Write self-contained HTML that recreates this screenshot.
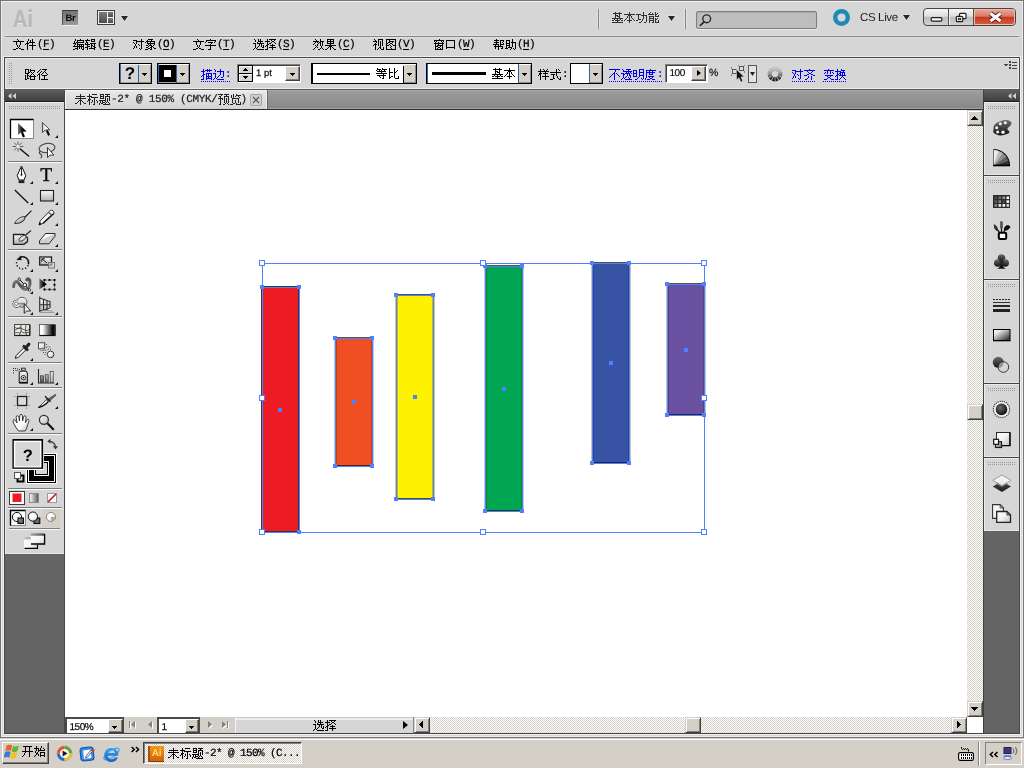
<!DOCTYPE html>
<html lang="zh">
<head>
<meta charset="utf-8">
<title>Adobe Illustrator - 未标题-2* @ 150% (CMYK/预览)</title>
<style>
html,body{margin:0;padding:0}
body{width:1024px;height:768px;overflow:hidden;position:relative;will-change:transform;text-rendering:geometricPrecision;font-kerning:none;background:#d6d6d6;font-family:"Liberation Sans",sans-serif;font-size:12px;line-height:12px;color:#000}
.a{position:absolute}
.t{position:absolute;white-space:nowrap;height:12px;line-height:12px;font-size:0}
.t span{font-family:"Liberation Mono",monospace;font-size:11px;letter-spacing:-.6px;vertical-align:top;display:inline-block;height:12px;line-height:12px;position:relative;top:1px;-webkit-text-stroke:.22px currentColor}
.t u{text-decoration:underline;text-underline-offset:2px;text-decoration-thickness:1px}
svg.z{display:inline-block;vertical-align:top;overflow:visible;fill:currentColor;shape-rendering:crispEdges}
svg.zv{display:inline-block;vertical-align:top;overflow:visible;fill:currentColor}
.lnk{color:#0000e6}
.lnk::after{content:"";position:absolute;left:0;right:1px;bottom:-2px;height:1px;background:repeating-linear-gradient(90deg,#0000e6 0 1px,transparent 1px 2px)}
.tri{position:absolute;width:0;height:0;border-left:3.800px solid transparent;border-right:3.800px solid transparent;border-top:5.300px solid #262626;margin-left:-.3px}
.chk{background-color:#fff;background-image:conic-gradient(#d4d0c8 25%,#fff 0 50%,#d4d0c8 0 75%,#fff 0);background-size:2px 2px}
.btn{position:absolute;background:#d4d0c8;box-sizing:border-box;border:1px solid;border-color:#fff #404040 #404040 #fff;box-shadow:inset -1px -1px 0 #808080,inset 1px 1px 0 #d4d0c8}
.sunk{position:absolute;box-sizing:border-box;border:1px solid;border-color:#808080 #fff #fff #808080;box-shadow:inset 1px 1px 0 #404040}
.dd{position:absolute;box-sizing:border-box;border:1px solid #000;background:#fff}
.ddb{position:absolute;background:#d4d0c8;top:0;bottom:0;right:0;width:12px;box-shadow:inset 0 1px 0 #fff,inset -1px -1px 0 #8a8a8a}
.ar{position:absolute;width:5px;height:3px;background:linear-gradient(#000,#000) 0 0/5px 1px no-repeat,linear-gradient(#000,#000) 1px 1px/3px 1px no-repeat,linear-gradient(#000,#000) 2px 2px/1px 1px no-repeat}
.sep{position:absolute;left:8px;width:54px;height:1px;background:#7c7c7c;box-shadow:0 1px 0 #fafafa}
.grip{position:absolute;height:3px;background-image:radial-gradient(circle at 0.5px 0.5px,#9a9a9a 0.6px,transparent 0.7px);background-size:2px 2px}
</style>
</head>
<body>
<svg width="0" height="0" style="position:absolute;left:-10px;top:-10px" aria-hidden="true"><defs><path id="r57fa" d="M3 1h1v1h-1zM7 1h1v1h-1zM1 2h9v1h-9zM3 3h1v1h-1zM7 3h1v1h-1zM3 4h3v1h-3zM7 4h1v1h-1zM3 5h1v1h-1zM5 5h3v1h-3zM3 6h1v1h-1zM7 6h1v1h-1zM0 7h11v1h-11zM2 8h1v1h-1zM5 8h1v1h-1zM8 8h1v1h-1zM0 9h2v1h-2zM3 9h5v1h-5zM9 9h2v1h-2zM5 10h1v1h-1zM0 11h11v1h-11z"/><path id="r672c" d="M5 1h1v1h-1zM5 2h1v1h-1zM0 3h11v1h-11zM4 4h3v1h-3zM3 5h1v1h-1zM5 5h1v1h-1zM7 5h1v1h-1zM3 6h1v1h-1zM5 6h1v1h-1zM7 6h1v1h-1zM2 7h1v1h-1zM5 7h1v1h-1zM8 7h1v1h-1zM1 8h1v1h-1zM5 8h1v1h-1zM9 8h1v1h-1zM0 9h1v1h-1zM3 9h5v1h-5zM10 9h1v1h-1zM5 10h1v1h-1zM5 11h1v1h-1z"/><path id="r529f" d="M7 1h1v1h-1zM7 2h1v1h-1zM0 3h5v1h-5zM7 3h1v1h-1zM2 4h1v1h-1zM5 4h6v1h-6zM2 5h1v1h-1zM7 5h1v1h-1zM10 5h1v1h-1zM2 6h1v1h-1zM7 6h1v1h-1zM10 6h1v1h-1zM2 7h1v1h-1zM7 7h1v1h-1zM10 7h1v1h-1zM2 8h3v1h-3zM6 8h1v1h-1zM10 8h1v1h-1zM0 9h2v1h-2zM6 9h1v1h-1zM10 9h1v1h-1zM5 10h1v1h-1zM10 10h1v1h-1zM3 11h2v1h-2zM8 11h2v1h-2z"/><path id="r80fd" d="M2 1h1v1h-1zM7 1h1v1h-1zM1 2h1v1h-1zM4 2h1v1h-1zM7 2h1v1h-1zM9 2h1v1h-1zM0 3h6v1h-6zM7 3h2v1h-2zM7 4h1v1h-1zM10 4h1v1h-1zM1 5h5v1h-5zM7 5h4v1h-4zM1 6h1v1h-1zM5 6h1v1h-1zM1 7h5v1h-5zM7 7h1v1h-1zM9 7h1v1h-1zM1 8h1v1h-1zM5 8h1v1h-1zM7 8h2v1h-2zM1 9h5v1h-5zM7 9h1v1h-1zM10 9h1v1h-1zM1 10h1v1h-1zM5 10h1v1h-1zM7 10h1v1h-1zM10 10h1v1h-1zM1 11h1v1h-1zM4 11h2v1h-2zM7 11h4v1h-4z"/><path id="r6587" d="M4 1h1v1h-1zM5 2h1v1h-1zM0 3h11v1h-11zM3 4h1v1h-1zM7 4h1v1h-1zM3 5h1v1h-1zM7 5h1v1h-1zM3 6h1v1h-1zM7 6h1v1h-1zM4 7h1v1h-1zM6 7h1v1h-1zM4 8h1v1h-1zM6 8h1v1h-1zM5 9h1v1h-1zM3 10h2v1h-2zM6 10h2v1h-2zM0 11h3v1h-3zM8 11h3v1h-3z"/><path id="r4ef6" d="M3 1h1v1h-1zM7 1h1v1h-1zM3 2h1v1h-1zM5 2h1v1h-1zM7 2h1v1h-1zM2 3h1v1h-1zM5 3h1v1h-1zM7 3h1v1h-1zM2 4h1v1h-1zM4 4h6v1h-6zM1 5h3v1h-3zM7 5h1v1h-1zM0 6h1v1h-1zM2 6h1v1h-1zM7 6h1v1h-1zM2 7h1v1h-1zM4 7h7v1h-7zM2 8h1v1h-1zM7 8h1v1h-1zM2 9h1v1h-1zM7 9h1v1h-1zM2 10h1v1h-1zM7 10h1v1h-1zM2 11h1v1h-1zM7 11h1v1h-1z"/><path id="r7f16" d="M2 1h1v1h-1zM7 1h1v1h-1zM2 2h1v1h-1zM4 2h7v1h-7zM1 3h1v1h-1zM4 3h1v1h-1zM10 3h1v1h-1zM1 4h1v1h-1zM3 4h8v1h-8zM0 5h3v1h-3zM4 5h1v1h-1zM2 6h1v1h-1zM4 6h7v1h-7zM1 7h1v1h-1zM4 7h1v1h-1zM6 7h1v1h-1zM8 7h1v1h-1zM10 7h1v1h-1zM0 8h11v1h-11zM4 9h1v1h-1zM6 9h1v1h-1zM8 9h1v1h-1zM10 9h1v1h-1zM2 10h3v1h-3zM6 10h1v1h-1zM8 10h1v1h-1zM10 10h1v1h-1zM0 11h2v1h-2zM4 11h1v1h-1zM9 11h2v1h-2z"/><path id="r8f91" d="M2 1h1v1h-1zM6 1h4v1h-4zM0 2h5v1h-5zM6 2h1v1h-1zM9 2h1v1h-1zM1 3h1v1h-1zM6 3h4v1h-4zM1 4h2v1h-2zM0 5h1v1h-1zM2 5h1v1h-1zM5 5h6v1h-6zM0 6h5v1h-5zM6 6h1v1h-1zM9 6h1v1h-1zM2 7h1v1h-1zM6 7h2v1h-2zM9 7h1v1h-1zM2 8h3v1h-3zM6 8h1v1h-1zM8 8h2v1h-2zM0 9h3v1h-3zM6 9h1v1h-1zM9 9h2v1h-2zM2 10h1v1h-1zM4 10h6v1h-6zM2 11h1v1h-1zM9 11h1v1h-1z"/><path id="r5bf9" d="M8 1h1v1h-1zM0 2h4v1h-4zM8 2h1v1h-1zM3 3h8v1h-8zM0 4h1v1h-1zM3 4h1v1h-1zM8 4h1v1h-1zM1 5h1v1h-1zM3 5h1v1h-1zM8 5h1v1h-1zM2 6h1v1h-1zM5 6h1v1h-1zM8 6h1v1h-1zM2 7h1v1h-1zM6 7h1v1h-1zM8 7h1v1h-1zM1 8h1v1h-1zM3 8h1v1h-1zM8 8h1v1h-1zM1 9h1v1h-1zM3 9h1v1h-1zM8 9h1v1h-1zM0 10h1v1h-1zM6 10h1v1h-1zM8 10h1v1h-1zM7 11h1v1h-1z"/><path id="r8c61" d="M3 1h5v1h-5zM2 2h1v1h-1zM6 2h1v1h-1zM1 3h9v1h-9zM0 4h1v1h-1zM2 4h1v1h-1zM5 4h1v1h-1zM9 4h1v1h-1zM2 5h8v1h-8zM3 6h1v1h-1zM5 6h1v1h-1zM9 6h1v1h-1zM1 7h2v1h-2zM4 7h3v1h-3zM8 7h1v1h-1zM3 8h1v1h-1zM6 8h2v1h-2zM1 9h2v1h-2zM5 9h2v1h-2zM8 9h1v1h-1zM3 10h2v1h-2zM6 10h1v1h-1zM9 10h2v1h-2zM0 11h3v1h-3zM5 11h2v1h-2z"/><path id="r5b57" d="M5 1h1v1h-1zM1 2h10v1h-10zM1 3h1v1h-1zM10 3h1v1h-1zM0 4h1v1h-1zM3 4h5v1h-5zM9 4h1v1h-1zM6 5h1v1h-1zM5 6h1v1h-1zM0 7h11v1h-11zM5 8h1v1h-1zM5 9h1v1h-1zM5 10h1v1h-1zM3 11h3v1h-3z"/><path id="r9009" d="M1 1h1v1h-1zM5 1h1v1h-1zM7 1h1v1h-1zM2 2h1v1h-1zM5 2h1v1h-1zM7 2h1v1h-1zM2 3h1v1h-1zM5 3h5v1h-5zM4 4h1v1h-1zM7 4h1v1h-1zM0 5h3v1h-3zM4 5h7v1h-7zM2 6h1v1h-1zM6 6h1v1h-1zM8 6h1v1h-1zM2 7h1v1h-1zM6 7h1v1h-1zM8 7h1v1h-1zM10 7h1v1h-1zM2 8h1v1h-1zM5 8h1v1h-1zM8 8h1v1h-1zM10 8h1v1h-1zM2 9h1v1h-1zM4 9h1v1h-1zM9 9h2v1h-2zM1 10h1v1h-1zM3 10h1v1h-1zM0 11h1v1h-1zM4 11h7v1h-7z"/><path id="r62e9" d="M2 1h1v1h-1zM4 1h7v1h-7zM2 2h1v1h-1zM6 2h1v1h-1zM9 2h1v1h-1zM0 3h5v1h-5zM7 3h2v1h-2zM2 4h1v1h-1zM6 4h1v1h-1zM9 4h1v1h-1zM2 5h1v1h-1zM4 5h2v1h-2zM10 5h1v1h-1zM2 6h2v1h-2zM7 6h1v1h-1zM1 7h2v1h-2zM5 7h5v1h-5zM0 8h1v1h-1zM2 8h1v1h-1zM7 8h1v1h-1zM2 9h1v1h-1zM4 9h7v1h-7zM2 10h1v1h-1zM7 10h1v1h-1zM0 11h3v1h-3zM7 11h1v1h-1z"/><path id="r6548" d="M2 1h1v1h-1zM7 1h1v1h-1zM3 2h1v1h-1zM7 2h1v1h-1zM0 3h6v1h-6zM7 3h4v1h-4zM2 4h1v1h-1zM4 4h1v1h-1zM6 4h2v1h-2zM9 4h1v1h-1zM1 5h1v1h-1zM5 5h1v1h-1zM7 5h1v1h-1zM9 5h1v1h-1zM0 6h1v1h-1zM4 6h1v1h-1zM7 6h1v1h-1zM9 6h1v1h-1zM2 7h1v1h-1zM4 7h1v1h-1zM7 7h1v1h-1zM9 7h1v1h-1zM3 8h1v1h-1zM8 8h1v1h-1zM2 9h1v1h-1zM4 9h1v1h-1zM8 9h1v1h-1zM1 10h1v1h-1zM7 10h1v1h-1zM9 10h1v1h-1zM0 11h1v1h-1zM5 11h2v1h-2zM10 11h1v1h-1z"/><path id="r679c" d="M2 1h7v1h-7zM2 2h1v1h-1zM5 2h1v1h-1zM8 2h1v1h-1zM2 3h7v1h-7zM2 4h1v1h-1zM5 4h1v1h-1zM8 4h1v1h-1zM2 5h7v1h-7zM5 6h1v1h-1zM0 7h11v1h-11zM4 8h3v1h-3zM3 9h1v1h-1zM5 9h1v1h-1zM7 9h1v1h-1zM2 10h1v1h-1zM5 10h1v1h-1zM8 10h1v1h-1zM0 11h2v1h-2zM5 11h1v1h-1zM9 11h2v1h-2z"/><path id="r89c6" d="M1 1h1v1h-1zM5 1h5v1h-5zM2 2h1v1h-1zM5 2h1v1h-1zM9 2h1v1h-1zM0 3h4v1h-4zM5 3h1v1h-1zM7 3h1v1h-1zM9 3h1v1h-1zM3 4h1v1h-1zM5 4h1v1h-1zM7 4h1v1h-1zM9 4h1v1h-1zM2 5h1v1h-1zM5 5h1v1h-1zM7 5h1v1h-1zM9 5h1v1h-1zM1 6h3v1h-3zM5 6h1v1h-1zM7 6h1v1h-1zM9 6h1v1h-1zM0 7h1v1h-1zM2 7h1v1h-1zM5 7h1v1h-1zM7 7h1v1h-1zM9 7h1v1h-1zM2 8h1v1h-1zM7 8h1v1h-1zM2 9h1v1h-1zM6 9h2v1h-2zM10 9h1v1h-1zM2 10h1v1h-1zM5 10h1v1h-1zM7 10h1v1h-1zM10 10h1v1h-1zM2 11h1v1h-1zM4 11h1v1h-1zM8 11h3v1h-3z"/><path id="r56fe" d="M1 1h10v1h-10zM1 2h1v1h-1zM4 2h1v1h-1zM10 2h1v1h-1zM1 3h1v1h-1zM4 3h5v1h-5zM10 3h1v1h-1zM1 4h1v1h-1zM3 4h2v1h-2zM7 4h1v1h-1zM10 4h1v1h-1zM1 5h2v1h-2zM5 5h2v1h-2zM10 5h1v1h-1zM1 6h1v1h-1zM4 6h1v1h-1zM7 6h1v1h-1zM10 6h1v1h-1zM1 7h3v1h-3zM5 7h1v1h-1zM8 7h3v1h-3zM1 8h1v1h-1zM6 8h1v1h-1zM10 8h1v1h-1zM1 9h1v1h-1zM5 9h1v1h-1zM10 9h1v1h-1zM1 10h1v1h-1zM6 10h1v1h-1zM10 10h1v1h-1zM1 11h10v1h-10z"/><path id="r7a97" d="M6 1h1v1h-1zM1 2h10v1h-10zM1 3h1v1h-1zM3 3h1v1h-1zM8 3h1v1h-1zM10 3h1v1h-1zM2 4h1v1h-1zM5 4h1v1h-1zM9 4h1v1h-1zM1 5h10v1h-10zM2 6h1v1h-1zM5 6h1v1h-1zM9 6h1v1h-1zM2 7h1v1h-1zM4 7h6v1h-6zM2 8h3v1h-3zM7 8h1v1h-1zM9 8h1v1h-1zM2 9h1v1h-1zM5 9h2v1h-2zM9 9h1v1h-1zM2 10h1v1h-1zM4 10h1v1h-1zM7 10h1v1h-1zM9 10h1v1h-1zM2 11h8v1h-8z"/><path id="r53e3" d="M1 2h9v1h-9zM1 3h1v1h-1zM9 3h1v1h-1zM1 4h1v1h-1zM9 4h1v1h-1zM1 5h1v1h-1zM9 5h1v1h-1zM1 6h1v1h-1zM9 6h1v1h-1zM1 7h1v1h-1zM9 7h1v1h-1zM1 8h1v1h-1zM9 8h1v1h-1zM1 9h9v1h-9zM1 10h1v1h-1zM9 10h1v1h-1z"/><path id="r5e2e" d="M3 1h1v1h-1zM1 2h5v1h-5zM7 2h4v1h-4zM3 3h1v1h-1zM7 3h1v1h-1zM10 3h1v1h-1zM1 4h5v1h-5zM7 4h1v1h-1zM9 4h1v1h-1zM3 5h1v1h-1zM7 5h1v1h-1zM10 5h1v1h-1zM0 6h6v1h-6zM7 6h4v1h-4zM2 7h1v1h-1zM5 7h1v1h-1zM7 7h1v1h-1zM1 8h9v1h-9zM2 9h1v1h-1zM5 9h1v1h-1zM9 9h1v1h-1zM2 10h1v1h-1zM5 10h1v1h-1zM8 10h2v1h-2zM5 11h1v1h-1z"/><path id="r52a9" d="M7 1h1v1h-1zM1 2h4v1h-4zM7 2h1v1h-1zM1 3h1v1h-1zM4 3h1v1h-1zM7 3h1v1h-1zM1 4h1v1h-1zM4 4h1v1h-1zM6 4h5v1h-5zM1 5h4v1h-4zM7 5h1v1h-1zM10 5h1v1h-1zM1 6h1v1h-1zM4 6h1v1h-1zM7 6h1v1h-1zM10 6h1v1h-1zM1 7h4v1h-4zM7 7h1v1h-1zM10 7h1v1h-1zM1 8h1v1h-1zM4 8h1v1h-1zM7 8h1v1h-1zM10 8h1v1h-1zM1 9h1v1h-1zM3 9h4v1h-4zM10 9h1v1h-1zM0 10h3v1h-3zM6 10h1v1h-1zM8 10h1v1h-1zM10 10h1v1h-1zM5 11h1v1h-1zM9 11h1v1h-1z"/><path id="r8def" d="M0 1h4v1h-4zM5 1h1v1h-1zM0 2h1v1h-1zM3 2h1v1h-1zM5 2h5v1h-5zM0 3h1v1h-1zM3 3h1v1h-1zM5 3h1v1h-1zM9 3h1v1h-1zM0 4h1v1h-1zM3 4h2v1h-2zM6 4h1v1h-1zM8 4h1v1h-1zM0 5h4v1h-4zM7 5h1v1h-1zM2 6h1v1h-1zM6 6h1v1h-1zM8 6h1v1h-1zM0 7h1v1h-1zM2 7h2v1h-2zM5 7h1v1h-1zM9 7h1v1h-1zM0 8h1v1h-1zM2 8h1v1h-1zM4 8h7v1h-7zM0 9h1v1h-1zM2 9h1v1h-1zM5 9h1v1h-1zM9 9h1v1h-1zM0 10h1v1h-1zM2 10h2v1h-2zM5 10h1v1h-1zM9 10h1v1h-1zM0 11h2v1h-2zM5 11h5v1h-5z"/><path id="r5f84" d="M3 1h1v1h-1zM5 1h5v1h-5zM2 2h1v1h-1zM8 2h1v1h-1zM1 3h1v1h-1zM4 3h1v1h-1zM7 3h1v1h-1zM0 4h1v1h-1zM3 4h1v1h-1zM6 4h1v1h-1zM8 4h1v1h-1zM2 5h1v1h-1zM5 5h1v1h-1zM9 5h1v1h-1zM1 6h2v1h-2zM4 6h1v1h-1zM10 6h1v1h-1zM0 7h1v1h-1zM2 7h1v1h-1zM5 7h5v1h-5zM2 8h1v1h-1zM7 8h1v1h-1zM2 9h1v1h-1zM7 9h1v1h-1zM2 10h1v1h-1zM7 10h1v1h-1zM2 11h1v1h-1zM4 11h7v1h-7z"/><path id="r63cf" d="M2 1h1v1h-1zM6 1h1v1h-1zM8 1h1v1h-1zM2 2h1v1h-1zM4 2h7v1h-7zM0 3h4v1h-4zM6 3h1v1h-1zM8 3h1v1h-1zM2 4h1v1h-1zM2 5h1v1h-1zM5 5h6v1h-6zM2 6h2v1h-2zM5 6h1v1h-1zM7 6h1v1h-1zM10 6h1v1h-1zM1 7h2v1h-2zM5 7h1v1h-1zM7 7h1v1h-1zM10 7h1v1h-1zM0 8h1v1h-1zM2 8h1v1h-1zM5 8h6v1h-6zM2 9h1v1h-1zM5 9h1v1h-1zM7 9h1v1h-1zM10 9h1v1h-1zM2 10h1v1h-1zM5 10h6v1h-6zM0 11h3v1h-3zM5 11h1v1h-1zM10 11h1v1h-1z"/><path id="r8fb9" d="M1 1h1v1h-1zM7 1h1v1h-1zM2 2h1v1h-1zM7 2h1v1h-1zM2 3h1v1h-1zM4 3h7v1h-7zM7 4h1v1h-1zM10 4h1v1h-1zM0 5h3v1h-3zM7 5h1v1h-1zM10 5h1v1h-1zM2 6h1v1h-1zM7 6h1v1h-1zM10 6h1v1h-1zM2 7h1v1h-1zM6 7h1v1h-1zM10 7h1v1h-1zM2 8h1v1h-1zM5 8h1v1h-1zM10 8h1v1h-1zM2 9h1v1h-1zM4 9h1v1h-1zM8 9h2v1h-2zM1 10h1v1h-1zM3 10h1v1h-1zM0 11h1v1h-1zM4 11h7v1h-7z"/><path id="r7b49" d="M1 1h1v1h-1zM6 1h1v1h-1zM1 2h4v1h-4zM6 2h5v1h-5zM0 3h1v1h-1zM3 3h1v1h-1zM5 3h1v1h-1zM8 3h1v1h-1zM1 4h9v1h-9zM5 5h1v1h-1zM0 6h11v1h-11zM7 7h1v1h-1zM1 8h9v1h-9zM3 9h1v1h-1zM7 9h1v1h-1zM4 10h1v1h-1zM7 10h1v1h-1zM6 11h2v1h-2z"/><path id="r6bd4" d="M1 1h1v1h-1zM6 1h1v1h-1zM1 2h1v1h-1zM6 2h1v1h-1zM1 3h1v1h-1zM6 3h1v1h-1zM9 3h1v1h-1zM1 4h1v1h-1zM6 4h1v1h-1zM8 4h1v1h-1zM1 5h4v1h-4zM6 5h2v1h-2zM1 6h1v1h-1zM6 6h1v1h-1zM1 7h1v1h-1zM6 7h1v1h-1zM1 8h1v1h-1zM6 8h1v1h-1zM1 9h1v1h-1zM3 9h2v1h-2zM6 9h1v1h-1zM10 9h1v1h-1zM1 10h2v1h-2zM6 10h1v1h-1zM10 10h1v1h-1zM1 11h1v1h-1zM7 11h4v1h-4z"/><path id="r6837" d="M2 1h1v1h-1zM5 1h1v1h-1zM9 1h1v1h-1zM2 2h1v1h-1zM6 2h1v1h-1zM8 2h1v1h-1zM0 3h11v1h-11zM2 4h1v1h-1zM7 4h1v1h-1zM1 5h3v1h-3zM5 5h5v1h-5zM1 6h2v1h-2zM7 6h1v1h-1zM0 7h1v1h-1zM2 7h1v1h-1zM7 7h1v1h-1zM2 8h1v1h-1zM4 8h7v1h-7zM2 9h1v1h-1zM7 9h1v1h-1zM2 10h1v1h-1zM7 10h1v1h-1zM2 11h1v1h-1zM7 11h1v1h-1z"/><path id="r5f0f" d="M6 1h1v1h-1zM8 1h1v1h-1zM6 2h1v1h-1zM9 2h1v1h-1zM6 3h1v1h-1zM0 4h11v1h-11zM6 5h1v1h-1zM1 6h4v1h-4zM6 6h1v1h-1zM3 7h1v1h-1zM6 7h1v1h-1zM3 8h1v1h-1zM7 8h1v1h-1zM3 9h1v1h-1zM7 9h1v1h-1zM10 9h1v1h-1zM3 10h2v1h-2zM8 10h1v1h-1zM10 10h1v1h-1zM0 11h3v1h-3zM9 11h2v1h-2z"/><path id="r4e0d" d="M0 1h11v1h-11zM6 2h1v1h-1zM6 3h1v1h-1zM5 4h1v1h-1zM4 5h2v1h-2zM7 5h1v1h-1zM3 6h1v1h-1zM5 6h1v1h-1zM8 6h1v1h-1zM2 7h1v1h-1zM5 7h1v1h-1zM9 7h1v1h-1zM1 8h1v1h-1zM5 8h1v1h-1zM10 8h1v1h-1zM0 9h1v1h-1zM5 9h1v1h-1zM5 10h1v1h-1zM5 11h1v1h-1z"/><path id="r900f" d="M1 1h1v1h-1zM5 1h5v1h-5zM2 2h1v1h-1zM7 2h1v1h-1zM2 3h9v1h-9zM5 4h1v1h-1zM7 4h1v1h-1zM9 4h1v1h-1zM0 5h3v1h-3zM4 5h5v1h-5zM10 5h1v1h-1zM2 6h2v1h-2zM6 6h1v1h-1zM8 6h1v1h-1zM2 7h1v1h-1zM6 7h1v1h-1zM8 7h2v1h-2zM2 8h1v1h-1zM5 8h1v1h-1zM9 8h1v1h-1zM2 9h1v1h-1zM4 9h1v1h-1zM7 9h1v1h-1zM9 9h1v1h-1zM1 10h1v1h-1zM3 10h1v1h-1zM8 10h1v1h-1zM0 11h1v1h-1zM4 11h7v1h-7z"/><path id="r660e" d="M6 1h5v1h-5zM0 2h4v1h-4zM6 2h1v1h-1zM10 2h1v1h-1zM0 3h1v1h-1zM3 3h1v1h-1zM6 3h1v1h-1zM10 3h1v1h-1zM0 4h1v1h-1zM3 4h1v1h-1zM6 4h5v1h-5zM0 5h4v1h-4zM6 5h1v1h-1zM10 5h1v1h-1zM0 6h1v1h-1zM3 6h1v1h-1zM6 6h1v1h-1zM10 6h1v1h-1zM0 7h1v1h-1zM3 7h1v1h-1zM6 7h5v1h-5zM0 8h4v1h-4zM6 8h1v1h-1zM10 8h1v1h-1zM5 9h1v1h-1zM10 9h1v1h-1zM4 10h1v1h-1zM8 10h1v1h-1zM10 10h1v1h-1zM2 11h2v1h-2zM9 11h1v1h-1z"/><path id="r5ea6" d="M5 1h1v1h-1zM1 2h10v1h-10zM1 3h1v1h-1zM4 3h1v1h-1zM7 3h1v1h-1zM1 4h9v1h-9zM1 5h1v1h-1zM4 5h1v1h-1zM7 5h1v1h-1zM1 6h1v1h-1zM4 6h4v1h-4zM1 7h1v1h-1zM1 8h1v1h-1zM3 8h6v1h-6zM1 9h1v1h-1zM4 9h1v1h-1zM7 9h1v1h-1zM0 10h1v1h-1zM5 10h2v1h-2zM0 11h1v1h-1zM2 11h3v1h-3zM7 11h3v1h-3z"/><path id="r9f50" d="M5 1h1v1h-1zM0 2h11v1h-11zM3 3h1v1h-1zM8 3h1v1h-1zM4 4h1v1h-1zM7 4h1v1h-1zM5 5h2v1h-2zM3 6h2v1h-2zM7 6h2v1h-2zM0 7h3v1h-3zM9 7h2v1h-2zM4 8h1v1h-1zM7 8h1v1h-1zM4 9h1v1h-1zM7 9h1v1h-1zM3 10h1v1h-1zM7 10h1v1h-1zM1 11h2v1h-2zM7 11h1v1h-1z"/><path id="r53d8" d="M5 1h1v1h-1zM1 2h10v1h-10zM4 3h1v1h-1zM7 3h1v1h-1zM2 4h1v1h-1zM4 4h1v1h-1zM7 4h1v1h-1zM9 4h1v1h-1zM1 5h1v1h-1zM4 5h1v1h-1zM7 5h1v1h-1zM10 5h1v1h-1zM2 7h8v1h-8zM4 8h1v1h-1zM7 8h1v1h-1zM5 9h2v1h-2zM4 10h1v1h-1zM7 10h1v1h-1zM1 11h3v1h-3zM8 11h3v1h-3z"/><path id="r6362" d="M2 1h1v1h-1zM6 1h1v1h-1zM2 2h1v1h-1zM6 2h4v1h-4zM0 3h6v1h-6zM8 3h1v1h-1zM2 4h1v1h-1zM5 4h5v1h-5zM2 5h1v1h-1zM4 5h2v1h-2zM7 5h1v1h-1zM9 5h1v1h-1zM2 6h2v1h-2zM5 6h1v1h-1zM7 6h1v1h-1zM9 6h1v1h-1zM1 7h2v1h-2zM4 7h7v1h-7zM0 8h1v1h-1zM2 8h1v1h-1zM7 8h1v1h-1zM2 9h1v1h-1zM6 9h1v1h-1zM8 9h1v1h-1zM2 10h1v1h-1zM5 10h1v1h-1zM9 10h1v1h-1zM0 11h3v1h-3zM4 11h1v1h-1zM10 11h1v1h-1z"/><path id="r672a" d="M5 1h1v1h-1zM5 2h1v1h-1zM1 3h9v1h-9zM5 4h1v1h-1zM0 5h11v1h-11zM5 6h1v1h-1zM4 7h3v1h-3zM3 8h1v1h-1zM5 8h1v1h-1zM7 8h1v1h-1zM2 9h1v1h-1zM5 9h1v1h-1zM8 9h1v1h-1zM0 10h2v1h-2zM5 10h1v1h-1zM9 10h2v1h-2zM5 11h1v1h-1z"/><path id="r6807" d="M2 1h1v1h-1zM5 1h5v1h-5zM2 2h1v1h-1zM0 3h5v1h-5zM2 4h1v1h-1zM4 4h7v1h-7zM2 5h1v1h-1zM7 5h1v1h-1zM1 6h3v1h-3zM7 6h1v1h-1zM1 7h2v1h-2zM5 7h1v1h-1zM7 7h1v1h-1zM9 7h1v1h-1zM0 8h1v1h-1zM2 8h1v1h-1zM5 8h1v1h-1zM7 8h1v1h-1zM10 8h1v1h-1zM2 9h1v1h-1zM4 9h1v1h-1zM7 9h1v1h-1zM10 9h1v1h-1zM2 10h1v1h-1zM7 10h1v1h-1zM2 11h1v1h-1zM6 11h2v1h-2z"/><path id="r9898" d="M1 1h4v1h-4zM6 1h5v1h-5zM1 2h1v1h-1zM4 2h1v1h-1zM8 2h1v1h-1zM1 3h4v1h-4zM6 3h5v1h-5zM1 4h1v1h-1zM4 4h1v1h-1zM6 4h1v1h-1zM10 4h1v1h-1zM1 5h4v1h-4zM6 5h1v1h-1zM8 5h1v1h-1zM10 5h1v1h-1zM6 6h1v1h-1zM8 6h1v1h-1zM10 6h1v1h-1zM0 7h7v1h-7zM8 7h1v1h-1zM10 7h1v1h-1zM1 8h1v1h-1zM3 8h1v1h-1zM6 8h1v1h-1zM8 8h1v1h-1zM1 9h1v1h-1zM3 9h3v1h-3zM7 9h1v1h-1zM9 9h1v1h-1zM0 10h1v1h-1zM2 10h2v1h-2zM6 10h1v1h-1zM10 10h1v1h-1zM0 11h1v1h-1zM4 11h7v1h-7z"/><path id="r9884" d="M0 1h5v1h-5zM6 1h5v1h-5zM3 2h1v1h-1zM8 2h1v1h-1zM1 3h2v1h-2zM6 3h5v1h-5zM2 4h1v1h-1zM6 4h1v1h-1zM10 4h1v1h-1zM0 5h5v1h-5zM6 5h1v1h-1zM8 5h1v1h-1zM10 5h1v1h-1zM2 6h1v1h-1zM4 6h1v1h-1zM6 6h1v1h-1zM8 6h1v1h-1zM10 6h1v1h-1zM2 7h1v1h-1zM6 7h1v1h-1zM8 7h1v1h-1zM10 7h1v1h-1zM2 8h1v1h-1zM6 8h1v1h-1zM8 8h1v1h-1zM10 8h1v1h-1zM2 9h1v1h-1zM6 9h1v1h-1zM8 9h1v1h-1zM10 9h1v1h-1zM2 10h1v1h-1zM7 10h1v1h-1zM9 10h1v1h-1zM1 11h2v1h-2zM5 11h2v1h-2zM10 11h1v1h-1z"/><path id="r89c8" d="M3 1h1v1h-1zM6 1h1v1h-1zM1 2h1v1h-1zM3 2h1v1h-1zM6 2h5v1h-5zM1 3h1v1h-1zM3 3h1v1h-1zM5 3h1v1h-1zM8 3h1v1h-1zM1 4h1v1h-1zM3 4h1v1h-1zM9 4h1v1h-1zM2 5h7v1h-7zM2 6h1v1h-1zM8 6h1v1h-1zM2 7h1v1h-1zM5 7h1v1h-1zM8 7h1v1h-1zM2 8h1v1h-1zM5 8h1v1h-1zM8 8h1v1h-1zM2 9h1v1h-1zM5 9h1v1h-1zM8 9h1v1h-1zM10 9h1v1h-1zM3 10h2v1h-2zM6 10h1v1h-1zM10 10h1v1h-1zM0 11h3v1h-3zM6 11h5v1h-5z"/><path id="r5f00" d="M1 1h9v1h-9zM3 2h1v1h-1zM7 2h1v1h-1zM3 3h1v1h-1zM7 3h1v1h-1zM3 4h1v1h-1zM7 4h1v1h-1zM3 5h1v1h-1zM7 5h1v1h-1zM0 6h11v1h-11zM3 7h1v1h-1zM7 7h1v1h-1zM2 8h1v1h-1zM7 8h1v1h-1zM2 9h1v1h-1zM7 9h1v1h-1zM1 10h1v1h-1zM7 10h1v1h-1zM0 11h1v1h-1zM7 11h1v1h-1z"/><path id="r59cb" d="M2 1h1v1h-1zM7 1h1v1h-1zM2 2h1v1h-1zM7 2h1v1h-1zM0 3h5v1h-5zM6 3h1v1h-1zM9 3h1v1h-1zM2 4h1v1h-1zM4 4h1v1h-1zM6 4h1v1h-1zM10 4h1v1h-1zM2 5h1v1h-1zM4 5h7v1h-7zM1 6h1v1h-1zM4 6h1v1h-1zM1 7h1v1h-1zM3 7h1v1h-1zM6 7h5v1h-5zM2 8h2v1h-2zM6 8h1v1h-1zM10 8h1v1h-1zM2 9h1v1h-1zM4 9h1v1h-1zM6 9h1v1h-1zM10 9h1v1h-1zM1 10h1v1h-1zM4 10h1v1h-1zM6 10h5v1h-5zM0 11h1v1h-1zM6 11h1v1h-1zM10 11h1v1h-1z"/></defs></svg>

<!-- ===== window frame ===== -->
<div class="a" style="left:0;top:0;width:1024px;height:1px;background:#747474"></div>
<div class="a" style="left:1px;top:1px;width:1022px;height:1px;background:#f3f3f3"></div>
<div class="a" style="left:0;top:0;width:1px;height:738px;background:#747474"></div>
<div class="a" style="left:1px;top:1px;width:1px;height:736px;background:#f0f0f0"></div>
<div class="a" style="left:3px;top:57px;width:1px;height:677px;background:#f0f0f0"></div>
<div class="a" style="left:1020px;top:57px;width:1px;height:677px;background:#f0f0f0"></div>
<div class="a" style="left:1022px;top:1px;width:1px;height:736px;background:#eeeeee"></div>
<div class="a" style="left:1023px;top:0;width:1px;height:738px;background:#777"></div>

<!-- ===== application bar ===== -->
<div class="a" id="ailogo" style="left:12.500px;top:6px;font-weight:700;font-size:24px;line-height:28px;color:#b9b9b9;-webkit-text-stroke:.5px #b4b4b4;text-shadow:0 1px 0 #f4f4f4;transform:scaleX(.82);transform-origin:0 0;letter-spacing:.3px">Ai</div>
<div class="a" style="left:62px;top:10px;width:16px;height:15px;box-sizing:border-box;border-top:1px solid #3c3c3c;border-left:1px solid #505050;background:linear-gradient(#747474,#9a9a9a);box-shadow:0 1px 0 #ececec;font-size:9.500px;font-weight:bold;line-height:16px;text-align:center;color:#0c0c0c;letter-spacing:-.3px">Br</div>
<svg class="a" style="left:97px;top:10px" width="19" height="15" viewBox="0 0 19 15">
 <defs><linearGradient id="lg1" x1="0" y1="0" x2="0" y2="1"><stop offset="0" stop-color="#7c7c7c"/><stop offset="1" stop-color="#4c4c4c"/></linearGradient></defs>
 <rect x="0" y="0" width="18" height="15" fill="#3c3c3c"/>
 <rect x="1" y="1" width="16" height="13" fill="#f4f4f4"/>
 <rect x="2" y="2" width="8" height="11" fill="url(#lg1)"/>
 <rect x="11" y="2" width="5" height="5" fill="url(#lg1)"/>
 <rect x="11" y="8" width="5" height="5" fill="url(#lg1)"/>
</svg>
<svg class="a" style="left:119px;top:14px" width="11" height="9" viewBox="-2 -2 11 9"><path d="M0 0h7l-3.500 5z" fill="#262626" stroke="#e4e4e4" stroke-width="1.600" paint-order="stroke"/></svg>

<div class="a" style="left:598px;top:9px;width:1px;height:20px;background:#848484;box-shadow:-1px 0 0 #e3e3e3,1px 0 0 #e3e3e3"></div>
<div class="t" style="left:612px;top:11px;color:#303030"><svg class="z" width="12" height="12"><title>基</title><use href="#r57fa"/></svg><svg class="z" width="12" height="12"><title>本</title><use href="#r672c"/></svg><svg class="z" width="12" height="12"><title>功</title><use href="#r529f"/></svg><svg class="z" width="12" height="12"><title>能</title><use href="#r80fd"/></svg></div>
<svg class="a" style="left:666px;top:14px" width="11" height="9" viewBox="-2 -2 11 9"><path d="M0 0h7l-3.500 5z" fill="#262626" stroke="#e4e4e4" stroke-width="1.600" paint-order="stroke"/></svg>
<div class="a" style="left:685px;top:9px;width:1px;height:20px;background:#848484;box-shadow:-1px 0 0 #e3e3e3,1px 0 0 #e3e3e3"></div>
<div class="a" style="left:696px;top:11px;width:121px;height:18px;box-sizing:border-box;background:#bdbdbd;border:1px solid #7d7d7d;border-radius:2px;box-shadow:0 1px 0 #eaeaea,inset 0 1px 1px #a8a8a8"></div>
<svg class="a" style="left:698px;top:12px" width="16" height="16" viewBox="0 0 16 16"><circle cx="8.700" cy="6.800" r="3.900" fill="none" stroke="#2c2c2c" stroke-width="1.400"/><path d="M6 9.800L2.400 13.400" stroke="#2c2c2c" stroke-width="1.800" stroke-linecap="round"/></svg>
<svg class="a" style="left:832px;top:8px" width="20" height="20" viewBox="0 0 20 20"><circle cx="9.5" cy="9.5" r="6.3" fill="none" stroke="#1c8ab4" stroke-width="4.4"/></svg>
<div class="a" style="left:860px;top:11px;font-size:11.5px;line-height:14px;color:#1e1e1e;letter-spacing:-.35px">CS Live</div>
<svg class="a" style="left:901px;top:13px" width="11" height="9" viewBox="-2 -2 11 9"><path d="M0 0h7l-3.500 5z" fill="#262626" stroke="#e4e4e4" stroke-width="1.600" paint-order="stroke"/></svg>

<!-- window buttons -->
<div class="a" style="left:923px;top:8px;width:93px;height:18px;box-sizing:border-box;border:1px solid #444;border-radius:4px;background:linear-gradient(#f6f6f6,#dedede 45%,#bcbcbc 52%,#d2d2d2);overflow:hidden">
  <div class="a" style="left:24px;top:0;width:1px;height:16px;background:#4e4e4e"></div>
  <div class="a" style="left:25px;top:0;width:1px;height:16px;background:#f0f0f0"></div>
  <div class="a" style="left:49px;top:0;width:1px;height:16px;background:#4e4e4e"></div>
  <div class="a" style="left:50px;top:0;width:41px;height:16px;background:linear-gradient(#eaa898,#dc7a66 45%,#c5391f 52%,#d4604a);box-shadow:inset 0 0 0 1px #f2b8a8;border-radius:0 3px 3px 0"></div>
  <svg class="a" style="left:0;top:0" width="92" height="16" viewBox="0 0 92 16">
    <rect x="7.200" y="8.700" width="10.600" height="3.400" rx="1" fill="#fff" stroke="#1e1e1e" stroke-width="1.200"/>
    <rect x="35.500" y="4.300" width="6.500" height="5.400" rx="1" fill="#fff" stroke="#1e1e1e" stroke-width="1.200"/>
    <rect x="32.300" y="7.300" width="6.500" height="5.400" rx="1" fill="#fff" stroke="#1e1e1e" stroke-width="1.200"/>
    <rect x="34.300" y="9.300" width="2.500" height="1.500" fill="none" stroke="#1e1e1e" stroke-width=".9"/>
    <path d="M66.500 4.500L76.500 12M76.500 4.500L66.500 12" stroke="#4a1a10" stroke-width="4.800"/>
    <path d="M66.500 4.500L76.500 12M76.500 4.500L66.500 12" stroke="#fff" stroke-width="3"/>
  </svg>
</div>

<!-- separator under app bar -->
<div class="a" style="left:5px;top:35px;width:1014px;height:1px;background:#e2e2e2"></div>
<div class="a" style="left:5px;top:36px;width:1014px;height:1px;background:#848484"></div>
<div class="a" style="left:5px;top:37px;width:1014px;height:1px;background:#e2e2e2"></div>

<!-- ===== menu bar ===== -->
<div class="t" style="left:13px;top:38px"><svg class="z" width="12" height="12"><title>文</title><use href="#r6587"/></svg><svg class="z" width="12" height="12"><title>件</title><use href="#r4ef6"/></svg><span>(<u>F</u>)</span></div>
<div class="t" style="left:73px;top:38px"><svg class="z" width="12" height="12"><title>编</title><use href="#r7f16"/></svg><svg class="z" width="12" height="12"><title>辑</title><use href="#r8f91"/></svg><span>(<u>E</u>)</span></div>
<div class="t" style="left:133px;top:38px"><svg class="z" width="12" height="12"><title>对</title><use href="#r5bf9"/></svg><svg class="z" width="12" height="12"><title>象</title><use href="#r8c61"/></svg><span>(<u>O</u>)</span></div>
<div class="t" style="left:193px;top:38px"><svg class="z" width="12" height="12"><title>文</title><use href="#r6587"/></svg><svg class="z" width="12" height="12"><title>字</title><use href="#r5b57"/></svg><span>(<u>T</u>)</span></div>
<div class="t" style="left:253px;top:38px"><svg class="z" width="12" height="12"><title>选</title><use href="#r9009"/></svg><svg class="z" width="12" height="12"><title>择</title><use href="#r62e9"/></svg><span>(<u>S</u>)</span></div>
<div class="t" style="left:313px;top:38px"><svg class="z" width="12" height="12"><title>效</title><use href="#r6548"/></svg><svg class="z" width="12" height="12"><title>果</title><use href="#r679c"/></svg><span>(<u>C</u>)</span></div>
<div class="t" style="left:373px;top:38px"><svg class="z" width="12" height="12"><title>视</title><use href="#r89c6"/></svg><svg class="z" width="12" height="12"><title>图</title><use href="#r56fe"/></svg><span>(<u>V</u>)</span></div>
<div class="t" style="left:433px;top:38px"><svg class="z" width="12" height="12"><title>窗</title><use href="#r7a97"/></svg><svg class="z" width="12" height="12"><title>口</title><use href="#r53e3"/></svg><span>(<u>W</u>)</span></div>
<div class="t" style="left:493px;top:38px"><svg class="z" width="12" height="12"><title>帮</title><use href="#r5e2e"/></svg><svg class="z" width="12" height="12"><title>助</title><use href="#r52a9"/></svg><span>(<u>H</u>)</span></div>

<!-- ===== control bar ===== -->
<div class="a" style="left:3px;top:56px;width:1018px;height:1px;background:#eee"></div>
<div class="a" id="ctl" style="left:4px;top:57px;width:1016px;height:33px;box-sizing:border-box;border:1px solid #444;border-bottom-color:#5a5a5a;background:#d6d6d6;box-shadow:inset 1px 1px 0 #ececec,inset -1px -1px 0 #ececec"></div>
<div class="grip" style="left:9px;top:63px;width:4px;height:21px"></div>
<div class="t" style="left:25px;top:68px"><svg class="z" width="12" height="12"><title>路</title><use href="#r8def"/></svg><svg class="z" width="12" height="12"><title>径</title><use href="#r5f84"/></svg></div>


<!-- fill box -->
<div class="dd" style="left:119px;top:63px;width:33px;height:21px;background:#d6d6d6">
  <div class="a" style="left:0;top:0;width:31px;height:1px;background:#f4f1ea"></div>
  <div class="a" style="left:0;top:18px;width:31px;height:1px;background:#a4a4a4"></div>
  <div class="a" style="left:0;top:0;width:1px;height:19px;background:#3a6cb4"></div>
  <div class="a" style="left:2px;top:0;width:16px;height:19px;font-weight:bold;font-size:17px;line-height:20px;text-align:center">?</div>
  <div class="a" style="left:18px;top:1px;width:1px;height:18px;background:#2a62b0"></div>
  <div class="ddb" style="left:19px;width:12px"></div><div class="ar" style="left:22px;top:9px"></div>
</div>
<!-- stroke box (control bar) -->
<div class="dd" style="left:157px;top:63px;width:33px;height:21px;background:#d6d6d6">
  <div class="a" style="left:0;top:0;width:31px;height:1px;background:#f4f1ea"></div>
  <div class="a" style="left:0;top:18px;width:31px;height:1px;background:#a4a4a4"></div>
  <div class="a" style="left:0;top:0;width:1px;height:19px;background:#3a6cb4"></div>
  <div class="a" style="left:1px;top:1px;width:17px;height:17px;background:#000"></div>
  <div class="a" style="left:6px;top:6px;width:7px;height:7px;background:#fff"></div>
  <div class="a" style="left:18px;top:1px;width:1px;height:18px;background:#2a62b0"></div>
  <div class="ddb" style="left:19px;width:12px"></div><div class="ar" style="left:22px;top:9px"></div>
</div>
<div class="t lnk" style="left:201px;top:68px"><svg class="z" width="12" height="12"><title>描</title><use href="#r63cf"/></svg><svg class="z" width="12" height="12"><title>边</title><use href="#r8fb9"/></svg><span>:</span></div>
<!-- stroke weight -->
<div class="sunk" style="left:237px;top:64px;width:64px;height:19px;background:#fff"></div>
<div class="a" style="left:238px;top:65px;width:15px;height:17px;box-sizing:border-box;border:1px solid #000;background:#d6d6d6;box-shadow:inset 1px 1px 0 #fff"></div>
<div class="a" style="left:239px;top:73px;width:13px;height:1px;background:#000"></div>
<div class="a" style="left:239px;top:74px;width:13px;height:1px;background:#fff"></div>
<svg class="a" style="left:239px;top:66px" width="13" height="15" viewBox="0 0 13 15" shape-rendering="crispEdges"><path d="M6 2h1v1h1v1h1v1h-5v-1h1v-1h1zM4 10h5v1h-1v1h-1v1h-1v-1h-1v-1h-1z"/></svg>
<div class="a" style="left:256px;top:67px;font-size:9.500px;line-height:13px;color:#111;letter-spacing:0;-webkit-text-stroke:.25px #111">1 pt</div>
<div class="btn" style="left:285px;top:66px;width:15px;height:15px"></div><div class="ar" style="left:290px;top:73px"></div>
<!-- profile -->
<div class="dd" style="left:311px;top:63px;width:106px;height:21px;border-left-width:2px">
  <div class="a" style="left:4px;top:9px;width:53px;height:2px;background:#000"></div>
  <div class="t" style="left:63px;top:3px"><svg class="z" width="12" height="12"><title>等</title><use href="#r7b49"/></svg><svg class="z" width="12" height="12"><title>比</title><use href="#r6bd4"/></svg></div>
  <div class="a" style="left:90px;top:2px;width:1px;height:17px;background:#000"></div>
  <div class="ddb"></div><div class="ar" style="left:94px;top:9px"></div>
</div>
<!-- brush dropdown -->
<div class="dd" style="left:426px;top:63px;width:106px;height:21px">
  <div class="a" style="left:0;top:0;width:1px;height:19px;background:#2a62b0"></div>
  <div class="a" style="left:5px;top:8px;width:54px;height:3px;background:#000"></div>
  <div class="t" style="left:65px;top:3px"><svg class="z" width="12" height="12"><title>基</title><use href="#r57fa"/></svg><svg class="z" width="12" height="12"><title>本</title><use href="#r672c"/></svg></div>
  <div class="a" style="left:91px;top:0;width:1px;height:19px;background:#2a62b0"></div>
  <div class="ddb"></div><div class="ar" style="left:95px;top:9px"></div>
</div>
<div class="t" style="left:538px;top:68px"><svg class="z" width="12" height="12"><title>样</title><use href="#r6837"/></svg><svg class="z" width="12" height="12"><title>式</title><use href="#r5f0f"/></svg><span>:</span></div>
<div class="dd" style="left:570px;top:63px;width:33px;height:21px">
  <div class="a" style="left:18px;top:0;width:1px;height:19px;background:#2a62b0"></div>
  <div class="ddb"></div><div class="ar" style="left:22px;top:9px"></div>
</div>
<div class="t lnk" style="left:609px;top:68px"><svg class="z" width="12" height="12"><title>不</title><use href="#r4e0d"/></svg><svg class="z" width="12" height="12"><title>透</title><use href="#r900f"/></svg><svg class="z" width="12" height="12"><title>明</title><use href="#r660e"/></svg><svg class="z" width="12" height="12"><title>度</title><use href="#r5ea6"/></svg><span>:</span></div>
<div class="sunk" style="left:665px;top:64px;width:43px;height:19px;background:#fff"></div>
<div class="a" style="left:669.500px;top:67px;font-size:10px;line-height:13px;color:#111;letter-spacing:-.45px;-webkit-text-stroke:.2px #111">100</div>
<div class="btn" style="left:691px;top:66px;width:15px;height:15px"></div>
<div class="a" style="left:697px;top:70px;width:0;height:0;border-top:3.5px solid transparent;border-bottom:3.5px solid transparent;border-left:4px solid #000"></div>
<div class="a" style="left:709px;top:67px;font-size:10.500px;line-height:13px;color:#111;-webkit-text-stroke:.2px #111">%</div>
<!-- select similar -->
<svg class="a" style="left:730px;top:65px" width="28" height="19" viewBox="0 0 28 19">
  <rect x="2.500" y="4.500" width="4" height="4" fill="#ddd" stroke="#555" stroke-width="1"/>
  <rect x="9.500" y="1.500" width="4" height="4" fill="#ddd" stroke="#555" stroke-width="1"/>
  <path d="M1 3h1M1 10h1M8 10h-1M8 0h1M15 0h-1M15 7h-1" stroke="#333" stroke-width="1"/>
  <path d="M6.500 4.500V15L9 12.800L10.800 17L12.800 16.200L11 12L14.200 11.800Z" fill="#111" stroke="#eee" stroke-width=".5"/>
  <rect x="18.500" y="0.500" width="8" height="17" fill="#e4e4e4" stroke="#555" stroke-width="1"/>
  <path d="M20 7h5l-2.500 4z" fill="#222"/>
</svg>
<!-- recolor wheel -->
<svg class="a" style="left:766px;top:65px" width="18" height="18" viewBox="0 0 18 18">
  <defs><linearGradient id="rw" x1="0" y1="0" x2="0" y2="1"><stop offset="0" stop-color="#c4c4c4"/><stop offset=".5" stop-color="#8c8c8c"/><stop offset="1" stop-color="#1e1e1e"/></linearGradient></defs>
  <circle cx="9" cy="9.300" r="7.300" fill="#c6c6c6"/>
  <circle cx="9" cy="9" r="5.200" fill="none" stroke="url(#rw)" stroke-width="4.400" stroke-dasharray="2.100 .620"/>
  <circle cx="9" cy="9" r="3" fill="#d6d6d6"/>
</svg>
<div class="t lnk" style="left:792px;top:68px"><svg class="z" width="12" height="12"><title>对</title><use href="#r5bf9"/></svg><svg class="z" width="12" height="12"><title>齐</title><use href="#r9f50"/></svg></div>
<div class="t lnk" style="left:823px;top:68px"><svg class="z" width="12" height="12"><title>变</title><use href="#r53d8"/></svg><svg class="z" width="12" height="12"><title>换</title><use href="#r6362"/></svg></div>
<svg class="a" style="left:1003px;top:61px" width="15" height="9" viewBox="0 0 15 9" shape-rendering="crispEdges"><path d="M1 3h4v1h-1v1h-2v-1h-1z" fill="#444"/><path d="M6 0h2v2h-2zM6 3h2v2h-2zM6 6h2v2h-2z" fill="#444"/><path d="M9 1.500h5M9 4.500h5M9 7.500h5" stroke="#444" stroke-width="1"/></svg>

<!-- ===== tab bar ===== -->
<div class="a" style="left:65px;top:90px;width:919px;height:19px;background:linear-gradient(#b0b0b0 0,#9c9c9c 1px,#888 18px,#a0a0a0 18px)"></div>
<div class="a" style="left:65px;top:109px;width:919px;height:1px;background:#2e2e2e"></div>
<div class="a" style="left:65px;top:90px;width:202px;height:19px;background:linear-gradient(#f6f6f6,#e6e6e6 2px,#d4d4d4);box-shadow:inset 1px 0 0 #f4f4f4,inset -1px 0 0 #f0f0f0"></div>
<div class="a" style="left:267px;top:90px;width:1px;height:19px;background:#666"></div>
<div class="t" style="left:75px;top:93px;color:#222"><svg class="z" width="12" height="12"><title>未</title><use href="#r672a"/></svg><svg class="z" width="12" height="12"><title>标</title><use href="#r6807"/></svg><svg class="z" width="12" height="12"><title>题</title><use href="#r9898"/></svg><span style="letter-spacing:-.33px">-2* @ 150% (CMYK/</span><svg class="z" width="12" height="12"><title>预</title><use href="#r9884"/></svg><svg class="z" width="12" height="12"><title>览</title><use href="#r89c8"/></svg><span style="margin-left:-1px">)</span></div>
<div class="a" style="left:250px;top:94px;width:12px;height:12px;box-sizing:border-box;border:1px solid #a4a4a4;border-radius:2px;background:#d0d0d0"></div>
<svg class="a" style="left:250px;top:94px" width="12" height="12" viewBox="0 0 12 12"><path d="M3 3L9 9M9 3L3 9" stroke="#505050" stroke-width="1.100"/></svg>

<!-- ===== canvas ===== -->
<div class="a" style="left:65px;top:110px;width:902px;height:607px;background:#fff"></div>

<!-- ===== artwork ===== -->
<svg class="a" style="left:0;top:0" width="1024" height="768" viewBox="0 0 1024 768">
<rect x="262" y="287" width="37" height="245" fill="#ed1c24" stroke="#3c3836" stroke-width="2"/>
<rect x="335.5" y="338" width="37" height="128" fill="#f04e23" stroke="#1a1a1a" stroke-width="1.500"/>
<rect x="396.5" y="295" width="37" height="204" fill="#fff200" stroke="#1a1a1a" stroke-width="1.500"/>
<rect x="485.5" y="266" width="37" height="245" fill="#00a651" stroke="#1a1a1a" stroke-width="1.500"/>
<rect x="592.5" y="263" width="37" height="200" fill="#3953a4" stroke="#1a1a1a" stroke-width="1.500"/>
<rect x="667.5" y="284" width="37" height="131" fill="#6950a1" stroke="#1a1a1a" stroke-width="1.500"/>
<g shape-rendering="crispEdges">
<rect x="262.500" y="263.500" width="442" height="269" fill="none" stroke="#4f80ff" stroke-width="1"/>
<rect x="262.5" y="287.5" width="37" height="245" fill="none" stroke="#4f80ff" stroke-width="1"/>
<rect x="335.5" y="338.5" width="37" height="128" fill="none" stroke="#4f80ff" stroke-width="1"/>
<rect x="396.5" y="295.5" width="37" height="204" fill="none" stroke="#4f80ff" stroke-width="1"/>
<rect x="485.5" y="266.5" width="37" height="245" fill="none" stroke="#4f80ff" stroke-width="1"/>
<rect x="592.5" y="263.5" width="37" height="200" fill="none" stroke="#4f80ff" stroke-width="1"/>
<rect x="667.5" y="284.5" width="37" height="131" fill="none" stroke="#4f80ff" stroke-width="1"/>
<path d="M260 285h4v4h-4zM297 285h4v4h-4zM260 530h4v4h-4zM297 530h4v4h-4zM278 408h4v4h-4zM333 336h4v4h-4zM370 336h4v4h-4zM333 464h4v4h-4zM370 464h4v4h-4zM352 400h4v4h-4zM394 293h4v4h-4zM431 293h4v4h-4zM394 497h4v4h-4zM431 497h4v4h-4zM413 395h4v4h-4zM483 264h4v4h-4zM520 264h4v4h-4zM483 509h4v4h-4zM520 509h4v4h-4zM502 387h4v4h-4zM590 261h4v4h-4zM627 261h4v4h-4zM590 461h4v4h-4zM627 461h4v4h-4zM609 361h4v4h-4zM665 282h4v4h-4zM702 282h4v4h-4zM665 413h4v4h-4zM702 413h4v4h-4zM684 348h4v4h-4z" fill="#4f80ff"/>
<rect x="259.5" y="260.5" width="5" height="5" fill="#fff" stroke="#4f80ff" stroke-width="1"/>
<rect x="259.5" y="395.5" width="5" height="5" fill="#fff" stroke="#4f80ff" stroke-width="1"/>
<rect x="259.5" y="529.5" width="5" height="5" fill="#fff" stroke="#4f80ff" stroke-width="1"/>
<rect x="480.5" y="260.5" width="5" height="5" fill="#fff" stroke="#4f80ff" stroke-width="1"/>
<rect x="480.5" y="529.5" width="5" height="5" fill="#fff" stroke="#4f80ff" stroke-width="1"/>
<rect x="701.5" y="260.5" width="5" height="5" fill="#fff" stroke="#4f80ff" stroke-width="1"/>
<rect x="701.5" y="395.5" width="5" height="5" fill="#fff" stroke="#4f80ff" stroke-width="1"/>
<rect x="701.5" y="529.5" width="5" height="5" fill="#fff" stroke="#4f80ff" stroke-width="1"/>
</g></svg>

<!-- ===== scrollbars ===== -->
<style>
.sb{position:absolute;box-sizing:border-box;width:16px;height:16px;background:#d4d0c8;border:1px solid;border-color:#d4d0c8 #404040 #404040 #d4d0c8;box-shadow:inset 1px 1px 0 #fff,inset -1px -1px 0 #808080}
.sb svg{position:absolute;left:0;top:0}
</style>
<div class="a chk" style="left:967px;top:110px;width:16px;height:607px"></div>
<div class="sb" style="left:967px;top:110px"><svg width="14" height="14" viewBox="0 0 14 14" shape-rendering="crispEdges"><path d="M6 5h1v1h1v1h1v1h1v1h-7v-1h1v-1h1v-1h1z"/></svg></div>
<div class="sb" style="left:967px;top:404px"></div>
<div class="sb" style="left:967px;top:701px"><svg width="14" height="14" viewBox="0 0 14 14" shape-rendering="crispEdges"><path d="M3 5h7v1h-1v1h-1v1h-1v1h-1v-1h-1v-1h-1v-1h-1z"/></svg></div>
<div class="a chk" style="left:430px;top:717px;width:522px;height:16px"></div>
<div class="sb" style="left:414px;top:717px"><svg width="14" height="14" viewBox="0 0 14 14" shape-rendering="crispEdges"><path d="M8 3v7h-1v-1h-1v-1h-1v-1h-1v-1h1v-1h1v-1h1v-1z"/></svg></div>
<div class="sb" style="left:685px;top:717px"></div>
<div class="sb" style="left:951px;top:717px"><svg width="14" height="14" viewBox="0 0 14 14" shape-rendering="crispEdges"><path d="M5 3v7h1v-1h1v-1h1v-1h1v-1h-1v-1h-1v-1h-1v-1z"/></svg></div>
<div class="a" style="left:967px;top:717px;width:16px;height:16px;background:#fff"></div>

<!-- ===== tools panel ===== -->
<!-- left dark area + panel -->
<div class="a" style="left:4px;top:89px;width:1px;height:645px;background:#4a4a4a"></div>
<div class="a" style="left:5px;top:90px;width:59px;height:643px;background:#646464"></div>
<div class="a" style="left:64px;top:90px;width:1px;height:643px;background:#484848"></div>
<div class="a" style="left:5px;top:90px;width:59px;height:11px;background:linear-gradient(#606060,#3e3e3e)"></div>
<div class="a" style="left:5px;top:101px;width:59px;height:1px;background:#1c1c1c"></div>
<svg class="a" style="left:8px;top:93px" width="9" height="6" viewBox="0 0 9 6"><path d="M3.500 0v6l-3.500-3zM8 0v6l-3.500-3z" fill="#d2d2d2"/></svg>
<div class="a" style="left:5px;top:102px;width:59px;height:452px;background:#d6d6d6;box-shadow:inset 1px 1px 0 #ececec,inset 0 -1px 0 #e8e8e8"></div>
<div class="grip" style="left:9px;top:106px;width:52px"></div>
<div class="sep" style="top:161px"></div>
<div class="sep" style="top:249px"></div>
<div class="sep" style="top:316px"></div>
<div class="sep" style="top:362px"></div>
<div class="sep" style="top:387px"></div>
<div class="sep" style="top:433px"></div>
<div class="sep" style="top:488px"></div>
<div class="sep" style="top:507px"></div>
<div class="sep" style="top:528px;left:9px;width:51px"></div>
<div class="a" style="left:42px;top:509px;width:18px;height:18px;background:#d4d0c8"></div>
<svg class="a" style="left:0;top:100px" width="66" height="460" viewBox="0 100 66 460">
<defs>
 <linearGradient id="gv" x1="0" y1="0" x2="0" y2="1"><stop offset="0" stop-color="#fafafa"/><stop offset="1" stop-color="#b4b0a8"/></linearGradient>
 <linearGradient id="gh" x1="0" y1="0" x2="1" y2="0"><stop offset="0" stop-color="#fff"/><stop offset="1" stop-color="#000"/></linearGradient>
 <linearGradient id="gh2" x1="0" y1="0" x2="1" y2="0"><stop offset="0" stop-color="#fff"/><stop offset="1" stop-color="#555"/></linearGradient>
 <linearGradient id="gd" x1="0" y1="0" x2="1" y2="1"><stop offset="0" stop-color="#fff"/><stop offset="1" stop-color="#8a8a86"/></linearGradient>
 <linearGradient id="gk" x1="0" y1="0" x2="1" y2="0"><stop offset="0" stop-color="#777"/><stop offset=".6" stop-color="#000"/></linearGradient>
 <linearGradient id="gdsel" x1="0" y1="0" x2="1" y2="0"><stop offset="0" stop-color="#c8c8c4"/><stop offset=".5" stop-color="#fff"/></linearGradient>
 <path id="sub" d="M3 0v3h-3z" fill="#111"/>
 <path id="arw" d="M0 0V12L2.800 9.500L4.900 14.400L7 13.500L4.900 8.700L8.600 8.500Z"/>
</defs>
<!-- row 1 -->
<rect x="10.500" y="119.500" width="23" height="19" fill="#fff" stroke="#8a8a8a"/><path d="M33.500 119.500h-23v19" fill="none" stroke="#000" stroke-width="1.300"/>
<use href="#arw" x="18" y="123" fill="url(#gk)"/>
<path d="M46.200 130.800l2 4.700l1.500-.700l-2-4.600z" fill="#000" stroke="#000" stroke-width=".5"/><path d="M42.400 122.500v10l2.700-2.400l4.700-.300z" fill="url(#gdsel)" stroke="#222" stroke-width=".8"/>
<use href="#sub" x="55" y="135"/>
<!-- magic wand -->
<path d="M18 141.500v10M12.500 146.500h11M14.200 142.700l7.600 7.600M21.800 142.700l-7.600 7.600" stroke="#3a3a3a" stroke-width=".75"/>
<circle cx="18" cy="146.500" r="2" fill="#eee" stroke="#555" stroke-width=".5" stroke-dasharray=".7 .7"/>
<path d="M20.500 149.200L28.600 156" stroke="#111" stroke-width="1.500" stroke-linecap="round"/>
<!-- lasso -->
<ellipse cx="47" cy="148" rx="8" ry="4.600" fill="none" stroke="#3a3a3a" stroke-width="1" transform="rotate(-8 47 148)"/>
<path d="M40 151.500q-1.500 1.500.3 2.500t1.500 2.500t-1.300 1.500" fill="none" stroke="#3a3a3a" stroke-width="1.100"/>
<path d="M47.500 147.500v10l2.600-2.400h3.800z" fill="#fff" stroke="#222" stroke-width=".9"/>
<!-- pen -->
<path d="M21.500 166L25.800 175.500L24 180h-5l-1.800-4.500z" fill="#fff" stroke="#111" stroke-width="1"/>
<path d="M21.500 167.500v6.500" stroke="#111" stroke-width=".9"/><circle cx="21.500" cy="174.800" r="1" fill="#111"/>
<rect x="18.600" y="180.300" width="5.800" height="2.800" fill="#222"/>
<use href="#sub" x="30" y="181"/>
<text x="40.300" y="181" font-family="Liberation Serif,serif" font-size="19.500" fill="#0a0a0a" stroke="#0a0a0a" stroke-width=".35">T</text>
<use href="#sub" x="55" y="181"/>
<!-- line / rect -->
<path d="M14.800 190L28.200 203" stroke="#111" stroke-width="1.300"/>
<use href="#sub" x="30" y="202"/>
<rect x="40.500" y="190.500" width="13" height="10.500" fill="url(#gv)" stroke="#1e1e1e" stroke-width="1.100"/>
<use href="#sub" x="55" y="202"/>
<!-- paintbrush -->
<path d="M30.600 209.800L24 216.400" stroke="#f0f0f0" stroke-width="1.200"/>
<path d="M31.400 210.600L24.800 217.200" stroke="#1e1e1e" stroke-width="1.300"/>
<path d="M24.600 216.600q1.300 2.200-1.400 4.600t-8.600 2.400q1.200-3.300 4.400-5.300t5.600-1.700z" fill="url(#gbr)" stroke="#222" stroke-width=".9"/>
<defs><linearGradient id="gbr" x1="0" y1="0" x2="1" y2="1"><stop offset="0" stop-color="#fff"/><stop offset=".45" stop-color="#e0e0e0"/><stop offset="1" stop-color="#3a3a3a"/></linearGradient></defs>
<!-- pencil -->
<path d="M50.300 210.400l1.700-.300l2 1.700l-.200 1.800l-10.800 9.700l-3.800 1.600l1-4z" fill="#f4f4f2" stroke="#2a2a2a" stroke-width=".9"/>
<path d="M53.700 213.500L43.100 223.200" stroke="#0e0e0e" stroke-width="1.500"/>
<path d="M48.300 212.200l3.300 2.900" stroke="#555" stroke-width="1.300"/><path d="M39 225l2.300-1l-1.600-1.500z" fill="#000" stroke="#000" stroke-width=".5"/>
<use href="#sub" x="55" y="223"/>
<!-- blob brush -->
<path d="M13.500 234.500h10.500l3.500 3.300v3.800l-3.500 2.700h-10.500z" fill="url(#gv)" stroke="#222" stroke-width="1.300"/>
<path d="M31 230.500l-6.500 5.500" stroke="#333" stroke-width="1.400"/>
<ellipse cx="22.500" cy="238.200" rx="4.200" ry="2" transform="rotate(-35 22.500 238.200)" fill="#ddd" stroke="#333" stroke-width=".9"/>
<!-- eraser -->
<path d="M45.500 233.500h9.500l-6 7.500h-9.500z" fill="#fafafa" stroke="#2a2a2a" stroke-width="1"/>
<path d="M39.500 241v2.800h9.500l6-7.500v-2.800" fill="#cfcfcf" stroke="#2a2a2a" stroke-width="1"/>
<use href="#sub" x="55" y="244"/>
<!-- rotate -->
<path d="M21.050 257A6 6 0 0 1 28.400 264.350" fill="none" stroke="#111" stroke-width="1.400"/>
<path d="M28.400 264.350A6 6 0 1 1 17.200 260.300" fill="none" stroke="#111" stroke-width="1.400" stroke-dasharray="1.200 1.950" stroke-dashoffset="-1"/>
<path d="M16.400 259.800l4.600-4.400l.500 4.900z" fill="#111"/>
<use href="#sub" x="30" y="269"/>
<!-- scale -->
<rect x="39.700" y="257" width="11.800" height="8" fill="url(#gv)" stroke="#1e1e1e" stroke-width="1.300"/>
<path d="M42.300 259.200l4.700 3.800M41.800 258.800h3M41.800 258.800v2.800" stroke="#111" stroke-width="1" fill="none"/>
<rect x="48.500" y="262.500" width="6" height="5.500" fill="#d6d6d6" fill-opacity=".55" stroke="#777"/>
<use href="#sub" x="55" y="269"/>
<!-- warp -->
<path d="M13.600 286.500C13.600 282 16 280.500 18 282.500C20 284.500 22 289.600 26 289.600C29.500 289.600 30.500 284 29.800 280.600C29.400 278.600 27.500 278.200 26.800 279.700" fill="none" stroke="url(#gwp)" stroke-width="3" stroke-linecap="round"/>
<defs><linearGradient id="gwp" x1="0" y1="0" x2="1" y2="1"><stop offset="0" stop-color="#8a8a8a"/><stop offset=".5" stop-color="#4a4a4a"/><stop offset="1" stop-color="#8a8a8a"/></linearGradient></defs>
<path d="M19.400 279.300L29.600 290.300" stroke="#111" stroke-width="1"/>
<circle cx="19.200" cy="279.100" r="1.200" fill="#fff" stroke="#111" stroke-width=".8"/><circle cx="24.800" cy="285" r="1.800" fill="#fff" stroke="#111" stroke-width=".9"/><circle cx="29.400" cy="290" r="1.200" fill="#fff" stroke="#111" stroke-width=".8"/>
<use href="#sub" x="30" y="291"/>
<!-- free transform -->
<rect x="44.500" y="280" width="10" height="9.500" fill="none" stroke="#111" stroke-width=".8" stroke-dasharray=".8 .8"/>
<path d="M43.500 279h2v2h-2zM48.500 279h2v2h-2zM53.500 279h2v2h-2zM53.500 283.700h2v2h-2zM43.500 288.500h2v2h-2zM48.500 288.500h2v2h-2zM53.500 288.500h2v2h-2z" fill="#000"/>
<path d="M39.300 278.300v11.200l7.600-5.300z" fill="url(#gk)"/>
<!-- shape builder -->
<circle cx="16.600" cy="303.800" r="3.700" fill="#e4e2dc" stroke="#4a4a4a" stroke-width="1"/><circle cx="22" cy="302.200" r="4.900" fill="#e4e2dc" stroke="#4a4a4a" stroke-width="1"/><circle cx="16.600" cy="303.800" r="3.200" fill="#e4e2dc"/><circle cx="22" cy="302.200" r="4.400" fill="url(#gv)"/><circle cx="16.600" cy="303.800" r="3.200" fill="#e4e2dc" fill-opacity=".6"/>
<circle cx="16.200" cy="303.700" r="1.600" fill="#fff" stroke="#4a4a4a" stroke-width=".7"/>
<path d="M18.500 303.700h5" stroke="#222" stroke-width="1.100" stroke-dasharray="1 1"/>
<path d="M24.200 303.500v9.800l2.500-2.300h4z" fill="url(#gdsel)" stroke="#1a1a1a" stroke-width=".9"/>
<use href="#sub" x="30" y="312"/>
<!-- perspective grid -->
<path d="M40 298l10 3.600v6.600l-10 3.300z" fill="url(#gv)"/>
<path d="M39.700 296.500v15.300M39.700 298l10.300 3.600v6.400M39.700 304.800h10.300M43.500 299.300v11.200M47 300.600v9.400" fill="none" stroke="#2a2a2a" stroke-width="1.100"/>
<path d="M39.500 311.200l10-2.900" stroke="#2a2a2a" stroke-width="1"/>
<path d="M39.500 311.800l15 .500v.800l-15-.300zM42 309.800l11 1v.700l-11-.800z" fill="#8e8e8e"/>
<use href="#sub" x="55" y="312"/>
<!-- mesh -->
<rect x="14.500" y="324.500" width="15" height="10.800" fill="#ebe8e1" stroke="#3a3a3a" stroke-width=".9"/>
<path d="M14.500 335.600h15.500v-11" fill="none" stroke="#111" stroke-width="1"/>
<path d="M15 330.500q4-4.500 7.500-1.500t7 .5M20.800 325q1.500 5-1.200 10M26 325q-1.500 4 .6 10M15 327.600q3 2 5.600.4M15 333q3-1.500 5 .5M21 331.500q3 2.500 8.500.5" fill="none" stroke="#2a2a2a" stroke-width=".75"/>
<!-- gradient -->
<rect x="39.500" y="324.500" width="15.300" height="10.800" fill="url(#gh3)" stroke="#4a4a4a" stroke-width=".8"/>
<path d="M39.500 335.600h15.700v-11" fill="none" stroke="#000" stroke-width="1"/>
<defs><linearGradient id="gh3" x1="0" y1="0" x2="1" y2="0"><stop offset="0" stop-color="#fff"/><stop offset=".2" stop-color="#fff"/><stop offset=".85" stop-color="#0a0a0a"/><stop offset="1" stop-color="#000"/></linearGradient>
<linearGradient id="gd3" x1="0" y1="0" x2="1" y2="1"><stop offset="0" stop-color="#fff"/><stop offset=".5" stop-color="#f0eee9"/><stop offset="1" stop-color="#b4b2ac"/></linearGradient></defs>
<!-- eyedropper -->
<path d="M15.200 358.300l1-2.800l8.200-8.200l2 2l-8.200 8.200z" fill="#f4f4f4" stroke="#222" stroke-width="1"/>
<path d="M23 345.500l5 5" stroke="#222" stroke-width="2.600"/><path d="M25.500 348l3.300-3.800" stroke="#222" stroke-width="3.200" stroke-linecap="round"/>
<use href="#sub" x="30" y="358"/>
<!-- blend -->
<rect x="38.500" y="342.800" width="6.200" height="6" fill="url(#gd3)" stroke="#4a4a4a"/>
<circle cx="50.600" cy="354.400" r="3.300" fill="url(#gd3)" stroke="#3a3a3a"/>
<path d="M46 344.500h1M47.500 346.500h1M49.500 347h1M46 347.500h1M48 349h1M50 349.500h1M40.500 350.500h1M42.500 350.500h1M44.500 350.500h1M46.500 350h1M43 352.500h1M45 352.500h1M44.500 354.500h1" stroke="#555" stroke-width="1"/>
<!-- spray -->
<path d="M19.200 373.300l1-2h6l1.200 2v9.200h-8.200z" fill="url(#gv)" stroke="#222" stroke-width="1.100"/>
<path d="M19.200 383h8.600" stroke="#000" stroke-width="1.200"/>
<rect x="21.500" y="368.200" width="3.700" height="2" fill="#f4f4f4" stroke="#222" stroke-width=".9"/>
<circle cx="23.400" cy="377.600" r="2.200" fill="#f4f4f4" stroke="#222" stroke-width=".9"/><circle cx="23.400" cy="377.600" r=".9" fill="#111"/>
<path d="M13 368.500h1M15 368.500h1M17 369h1M19 369.500h1M13 370.500h1M15.500 370.500h1M17.500 371h1M13 373h1" stroke="#222" stroke-width="1"/>
<use href="#sub" x="30" y="382"/>
<!-- graph -->
<path d="M38.500 369v14h15.800" fill="none" stroke="#222" stroke-width="1.100"/>
<rect x="40.500" y="375.800" width="3" height="6.700" fill="url(#gb1)" stroke="#333" stroke-width=".7"/><rect x="45.200" y="374.700" width="3" height="7.800" fill="url(#gb2)" stroke="#333" stroke-width=".7"/><rect x="50.200" y="371.400" width="3" height="11.100" fill="url(#gb3)" stroke="#333" stroke-width=".7"/>
<defs><linearGradient id="gb1" x1="0" y1="0" x2="0" y2="1"><stop offset="0" stop-color="#9a9a9a"/><stop offset="1" stop-color="#4a4a4a"/></linearGradient><linearGradient id="gb2" x1="0" y1="0" x2="0" y2="1"><stop offset="0" stop-color="#c0c0c0"/><stop offset="1" stop-color="#666"/></linearGradient><linearGradient id="gb3" x1="0" y1="0" x2="0" y2="1"><stop offset="0" stop-color="#f4f4f4"/><stop offset="1" stop-color="#b0b0b0"/></linearGradient></defs>
<use href="#sub" x="55" y="382"/>
<!-- artboard -->
<path d="M17.500 392.800v2M26.500 392.800v2M17.500 407.200v2M26.500 407.200v2M13.800 396.500h2M13.800 405.500h2M28.200 396.500h2M28.200 405.500h2" stroke="#9a9a9a" stroke-width="1"/>
<rect x="17.500" y="396.500" width="9.200" height="9" fill="#dadada" stroke="#1e1e1e" stroke-width="1.300"/>
<!-- slice -->
<path d="M38.200 407.600q6.500-2 9.800-5.800l-1.600-2.400q-3.800 4.600-8.200 8.200z" fill="#f4f4f4" stroke="#222" stroke-width=".8"/>
<path d="M38.200 407.700q6.700-1.800 10-5.800" fill="none" stroke="#111" stroke-width="1.200"/>
<path d="M47 399.600l8.600-5.400l.300 1.200l-7.300 6.400z" fill="url(#gkn)" stroke="#333" stroke-width=".6"/>
<defs><linearGradient id="gkn" x1="0" y1="0" x2="1" y2="1"><stop offset="0" stop-color="#e0e0e0"/><stop offset=".5" stop-color="#666"/><stop offset="1" stop-color="#222"/></linearGradient></defs>
<path d="M45 396.300l5.600 5.400" stroke="#111" stroke-width="1.200"/>
<use href="#sub" x="55" y="406"/>
<!-- hand -->
<path d="M18.500 431q-2.500-3-4.500-7t-.3-4.300t3.300 3.300l-.8-5.500q-.2-1.700 1.100-1.700t1.600 1.600l.6 3.500l.2-5q.1-1.500 1.400-1.500t1.300 1.500l.2 5.100l1-4.100q.4-1.400 1.500-1.100t.9 1.800l-.5 5l1.300-2.500q.7-1.200 1.700-.7t.4 1.900q-1.500 3.800-2 6t-1.800 3.700z" fill="url(#ghd)" stroke="#2a2a2a" stroke-width=".9"/>
<defs><linearGradient id="ghd" x1="0" y1="0" x2="1" y2="1"><stop offset="0" stop-color="#fff"/><stop offset=".6" stop-color="#fafaf8"/><stop offset="1" stop-color="#bdbbb5"/></linearGradient></defs>
<use href="#sub" x="30" y="428"/>
<!-- zoom -->
<path d="M47.400 423.300L53.200 429.200" stroke="#111" stroke-width="2.200" stroke-linecap="round"/>
<circle cx="43.900" cy="419.800" r="4.500" fill="url(#gzm)" stroke="#333" stroke-width="1.300"/>
<defs><linearGradient id="gzm" x1="0" y1="0" x2="1" y2="1"><stop offset="0" stop-color="#f4f4f4"/><stop offset=".5" stop-color="#dcdcdc"/><stop offset="1" stop-color="#b8b8b8"/></linearGradient></defs>
<!-- stroke box -->
<g shape-rendering="crispEdges">
<rect x="26" y="453" width="31" height="31" fill="#fff"/><rect x="27" y="454" width="29" height="29" fill="#000"/><rect x="28" y="455" width="27" height="27" fill="#fff"/><rect x="29" y="456" width="25" height="25" fill="#000"/>
<rect x="34" y="461" width="15" height="15" fill="#fff"/><rect x="35" y="462" width="13" height="13" fill="#000"/><rect x="36" y="463" width="11" height="11" fill="#d6d6d6"/>
<!-- fill box -->
</g>
<rect x="12.400" y="439" width="31.600" height="31" fill="#fff"/><rect x="12.400" y="439" width="30.800" height="29.800" fill="#000"/><rect x="13.800" y="440.700" width="27.700" height="26.800" fill="#fff"/><rect x="15.300" y="442.100" width="24.800" height="24.200" fill="#d6d6d6"/>
<text x="22.800" y="460.600" font-family="Liberation Sans,sans-serif" font-weight="bold" font-size="16.500" fill="#000">?</text>
<!-- swap -->
<path d="M49.500 441.300q5.200 .300 5.900 5.600" fill="none" stroke="#3a3a3a" stroke-width="1.300"/>
<path d="M47.300 441.300l3.200-2.500v5zM55.500 449.400l-2.700-3.100h5.300z" fill="#3a3a3a"/>
<!-- default -->
<rect x="17.500" y="475.500" width="6" height="6" fill="#d6d6d6" stroke="#000" stroke-width="2"/>
<rect x="14.500" y="472.500" width="6" height="6" fill="#fff" stroke="#555" stroke-width="1"/>
<!-- color / gradient / none -->
<rect x="9.500" y="491.500" width="15" height="13" fill="#fff" stroke="#3a3a3a"/>
<rect x="12.500" y="493.500" width="9" height="8.500" fill="#ed1c24"/>
<rect x="29.500" y="493.500" width="9" height="9" fill="url(#gh2)" stroke="#8a8a8a"/>
<rect x="47.500" y="493.500" width="9" height="9" fill="#fff" stroke="#9a9a9a"/>
<path d="M48 502L56 494" stroke="#e01020" stroke-width="1.700"/>
<!-- draw modes -->
<rect x="10.500" y="510.500" width="15" height="15" fill="#fff" stroke="#8a8a8a"/>
<path d="M25.500 510.500h-15v15" fill="none" stroke="#000" stroke-width="1.400"/>
<circle cx="17" cy="517" r="4.600" fill="url(#gd2)" stroke="#111" stroke-width="1"/>
<rect x="18" y="518" width="5.500" height="5.500" fill="url(#gsq)" stroke="#0a0a0a" stroke-width="1.100"/>
<rect x="34" y="518" width="5.800" height="5.500" fill="#6a6a6a" stroke="#0a0a0a" stroke-width="1.100"/>
<circle cx="32.900" cy="516.600" r="4.600" fill="url(#gd2)" stroke="#111" stroke-width="1"/>
<circle cx="51" cy="517" r="4.600" fill="url(#gd2)" stroke="#8e8c86" stroke-width="1"/>
<path d="M51 517h4.600a4.600 4.600 0 0 1-4.600 4.600z" fill="#aaa8a2"/>
<!-- screen mode -->
<rect x="24" y="537" width="13" height="11.500" fill="url(#gw)"/>
<rect x="24" y="537" width="13" height="2.500" fill="url(#gtb)"/>
<path d="M24.500 548.300h13v-3.500" stroke="#000" stroke-width="1.200" fill="none"/>
<rect x="30.500" y="533.200" width="14" height="10.800" fill="url(#gw)"/>
<rect x="30.500" y="533.200" width="14" height="2.600" fill="url(#gtb2)"/>
<path d="M31 544h13.600v-10" stroke="#000" stroke-width="1.300" fill="none"/>
<defs>
 <radialGradient id="gd2" cx=".4" cy=".35" r=".75"><stop offset="0" stop-color="#fff"/><stop offset=".6" stop-color="#f4f3ef"/><stop offset="1" stop-color="#c8c6c0"/></radialGradient>
 <linearGradient id="gsq" x1="0" y1="0" x2="1" y2="1"><stop offset="0" stop-color="#9a9a9a"/><stop offset="1" stop-color="#4a4a4a"/></linearGradient>
 <linearGradient id="gw" x1="0" y1="0" x2="1" y2="1"><stop offset="0" stop-color="#fff"/><stop offset=".6" stop-color="#f4f4f4"/><stop offset="1" stop-color="#cfcfcf"/></linearGradient>
 <linearGradient id="gtb" x1="0" y1="0" x2="1" y2="0"><stop offset="0" stop-color="#c8c8c8"/><stop offset="1" stop-color="#8a8a8a"/></linearGradient>
 <linearGradient id="gtb2" x1="0" y1="0" x2="1" y2="0"><stop offset="0" stop-color="#a8a8a8"/><stop offset="1" stop-color="#555"/></linearGradient>
</defs>
</svg>


<!-- ===== right dock ===== -->

<div class="a" style="left:983px;top:90px;width:37px;height:643px;background:#646464"></div>
<div class="a" style="left:983px;top:90px;width:1px;height:643px;background:#3e3e3e"></div>
<div class="a" style="left:1019px;top:89px;width:1px;height:645px;background:#4a4a4a"></div>
<div class="a" style="left:984px;top:90px;width:35px;height:11px;background:linear-gradient(#606060,#3e3e3e)"></div>
<div class="a" style="left:984px;top:101px;width:35px;height:1px;background:#1c1c1c"></div>
<svg class="a" style="left:1008px;top:93px" width="9" height="6" viewBox="0 0 9 6"><path d="M3.500 0v6l-3.500-3zM8 0v6l-3.500-3z" fill="#d2d2d2"/></svg>
<style>.pg{position:absolute;left:984px;width:35px;background:#d6d6d6;box-shadow:inset 1px 1px 0 #ececec,inset 0 -1px 0 #e6e6e6}</style>
<div class="pg" style="top:102px;height:73px"></div>
<div class="pg" style="top:176px;height:103px"></div>
<div class="pg" style="top:280px;height:103px"></div>
<div class="pg" style="top:384px;height:73px"></div>
<div class="pg" style="top:458px;height:73px"></div>
<div class="a" style="left:984px;top:175px;width:35px;height:1px;background:#444"></div>
<div class="a" style="left:984px;top:279px;width:35px;height:1px;background:#444"></div>
<div class="a" style="left:984px;top:383px;width:35px;height:1px;background:#444"></div>
<div class="a" style="left:984px;top:457px;width:35px;height:1px;background:#444"></div>
<div class="grip" style="left:988px;top:106px;width:28px"></div>
<div class="grip" style="left:988px;top:180px;width:28px"></div>
<div class="grip" style="left:988px;top:284px;width:28px"></div>
<div class="grip" style="left:988px;top:388px;width:28px"></div>
<div class="grip" style="left:988px;top:462px;width:28px"></div>
<svg class="a" style="left:984px;top:100px" width="36" height="434" viewBox="984 100 36 434">
<defs>
 <linearGradient id="dk" x1="0" y1="0" x2="0" y2="1"><stop offset="0" stop-color="#6e6e6e"/><stop offset="1" stop-color="#111"/></linearGradient>
 <linearGradient id="dw" x1="0" y1="0" x2="1" y2="1"><stop offset="0" stop-color="#fff"/><stop offset=".5" stop-color="#f0f0f0"/><stop offset="1" stop-color="#c0c0c0"/></linearGradient>
 <linearGradient id="dh" x1="0" y1="0" x2="1" y2="1"><stop offset="0" stop-color="#fff"/><stop offset=".25" stop-color="#e8e8e8"/><stop offset="1" stop-color="#1e1e1e"/></linearGradient>
 <radialGradient id="dr" cx=".4" cy=".35" r=".7"><stop offset="0" stop-color="#6a6a6a"/><stop offset="1" stop-color="#0a0a0a"/></radialGradient>
</defs>
<!-- color palette -->
<path d="M993.500 130q-1-6 6-8.500t10.500-.5t-1 6q-3 1.500-.5 3.500t-1.500 3.500q-6 2.500-10.500.5t-3-4.500z" fill="url(#dk)"/>
<circle cx="1000.300" cy="123.800" r="1.500" fill="#f4f4f4"/><circle cx="1005.300" cy="122.700" r="1.500" fill="#f4f4f4"/><circle cx="996.700" cy="127.700" r="1.500" fill="#f4f4f4"/><circle cx="997.700" cy="132" r="1.500" fill="#f4f4f4"/><circle cx="1003" cy="132.300" r="1.700" fill="#f4f4f4"/>
<!-- color guide -->
<path d="M993.5 165.5L1009.50 165.50A16.0 16.0 0 0 0 1008.72 160.56z" fill="#303030"/>
<path d="M993.5 165.5L1008.72 160.56A16.0 16.0 0 0 0 1006.44 156.10z" fill="#5e5e5e"/>
<path d="M993.5 165.5L1006.44 156.10A16.0 16.0 0 0 0 1002.90 152.56z" fill="#8e8e8e"/>
<path d="M993.5 165.5L1002.90 152.56A16.0 16.0 0 0 0 998.44 150.28z" fill="#bcbcbc"/>
<path d="M993.5 165.5L998.44 150.28A16.0 16.0 0 0 0 993.50 149.50z" fill="#ececec"/>
<path d="M993.5 149.5A16.0 16.0 0 0 1 1009.5 165.5" fill="none" stroke="#111" stroke-width="1.100"/>
<path d="M993.5 149.2v16.0" stroke="#555" stroke-width=".8"/>
<path d="M993.0 165.5h17.0" stroke="#000" stroke-width="1.600"/>
<!-- swatches -->
<rect x="993" y="195" width="17" height="13" fill="#2a2a2a"/>
<g>
<rect x="994.500" y="196.500" width="2.600" height="2.600" fill="#4a4a4a"/><rect x="998.500" y="196.500" width="2.600" height="2.600" fill="#6e6e6e"/><rect x="1002.500" y="196.500" width="2.600" height="2.600" fill="#9a9a9a"/><rect x="1006.500" y="196.500" width="2.600" height="2.600" fill="#fff"/>
<rect x="994.500" y="200.300" width="2.600" height="2.600" fill="#5e5e5e"/><rect x="998.500" y="200.300" width="2.600" height="2.600" fill="#8a8a8a"/><rect x="1002.500" y="200.300" width="2.600" height="2.600" fill="#4a4a4a"/><rect x="1006.500" y="200.300" width="2.600" height="2.600" fill="#fff"/>
<rect x="994.500" y="204.100" width="2.600" height="2.600" fill="#8a8a8a"/><rect x="998.500" y="204.100" width="2.600" height="2.600" fill="#eee"/><rect x="1002.500" y="204.100" width="2.600" height="2.600" fill="#fff"/><rect x="1006.500" y="204.100" width="2.600" height="2.600" fill="#d8d8d8"/>
</g>
<!-- brushes -->
<path d="M997.300 229.500l3.200 4.500M1001.500 227.500v6.500M1005 229.500l-2 4.500" stroke="#222" stroke-width="1.300"/>
<path d="M993.800 224.300q3.300 1 4.400 5.600l-1.400 1q-3.300-1.900-3-6.600z" fill="#2a2a2a"/>
<rect x="1000.300" y="221.800" width="2.300" height="6.200" fill="#5a5a5a" stroke="#333" stroke-width=".4"/>
<path d="M1003.800 229.800q.4-4.300 4.200-4.900q2.400.6 2.400 2.700q-2.200 3-5.400 3.200z" fill="#0e0e0e"/>
<rect x="998.800" y="232.800" width="7.400" height="6.200" rx="1.200" fill="#fff" stroke="#000" stroke-width="2"/>
<!-- symbols: club -->
<circle cx="1001.500" cy="258" r="3.800" fill="url(#dk)"/><circle cx="997.800" cy="263" r="3.800" fill="url(#dk)"/><circle cx="1005.200" cy="263" r="3.800" fill="url(#dk)"/>
<path d="M1001.500 261.500q.3 5 4.200 7.200h-8.400q3.900-2.200 4.200-7.200z" fill="#111"/><rect x="999.500" y="260" width="4" height="4" fill="#2a2a2a"/>
<!-- stroke -->
<path d="M993 299.500h17" stroke="#222" stroke-width="1" stroke-dasharray="2 1"/>
<path d="M993 302.500h17" stroke="#333" stroke-width="1"/><rect x="993" y="305" width="17" height="2" fill="#2a2a2a"/><rect x="993" y="309" width="17" height="3" fill="#222"/>
<!-- gradient -->
<rect x="993.500" y="329.500" width="16.500" height="11" fill="url(#dh)" stroke="#000" stroke-width="1"/>
<path d="M993 340.800h17.500" stroke="#000" stroke-width="1"/>
<!-- transparency -->
<circle cx="998.300" cy="362.300" r="5.500" fill="url(#dk)"/>
<circle cx="1003.400" cy="367" r="5.300" fill="#d8d8d8" fill-opacity=".62" stroke="#2a2a2a" stroke-width=".9"/>
<!-- appearance -->
<circle cx="1001.500" cy="409.400" r="8.100" fill="#f2f2f2" stroke="#111" stroke-width="1.200" stroke-dasharray="1 1.120"/>
<circle cx="1001.500" cy="409.400" r="5.800" fill="url(#dr)"/>
<!-- graphic styles -->
<rect x="996.500" y="432.500" width="13.300" height="13" fill="url(#dw)" stroke="#2a2a2a" stroke-width="1"/>
<path d="M996.500 445.700h13.500v-13.400" stroke="#000" stroke-width="1.300" fill="none"/>
<rect x="995.500" y="441.700" width="6" height="5.800" fill="url(#dgs)" stroke="#1a1a1a" stroke-width="1.200"/>
<rect x="993.700" y="439.300" width="4.800" height="5" fill="#fff" stroke="#111" stroke-width="1.200"/>
<defs><linearGradient id="dgs" x1="0" y1="0" x2="1" y2="1"><stop offset="0" stop-color="#e4e4e4"/><stop offset="1" stop-color="#7a7a7a"/></linearGradient></defs>
<!-- layers -->
<path d="M1001.900 481.300l9.100 5.300l-9.100 5.300l-9.100-5.300z" fill="url(#dly)"/>
<path d="M1001.900 479.800l6 3.500l-6 3.500l-6-3.500z" fill="#a4a4a4"/>
<path d="M1001.900 475l9.100 5.300l-9.100 5.300l-9.100-5.300z" fill="#f6f6f6" fill-opacity=".88" stroke="#7e7e7e" stroke-width=".7"/>
<defs><linearGradient id="dly" x1="0" y1="0" x2="0" y2="1"><stop offset="0" stop-color="#4a4a4a"/><stop offset="1" stop-color="#1e1e1e"/></linearGradient></defs>
<!-- artboards -->
<path d="M992.600 504.600h7.600l3.300 3.300v10.500h-10.900z" fill="url(#dw)" stroke="#333" stroke-width="1.100"/>
<path d="M1000.200 504.600v3.300h3.300" fill="none" stroke="#333" stroke-width=".9"/>
<path d="M996.700 511.500h10.300l3.500 3.500v7.300h-13.800z" fill="url(#dw)" stroke="#222" stroke-width="1.300"/>
<path d="M1007 511.500v3.500h3.500" fill="none" stroke="#222" stroke-width="1"/>
</svg>


<!-- ===== status bar ===== -->
<style>
.fld{position:absolute;box-sizing:border-box;background:#fff;border-top:2px solid #4a4a4a;border-left:2px solid #4a4a4a;border-right:1px solid #4a4a4a}
.sm{position:absolute;font-size:10px;line-height:12px;letter-spacing:-.45px;color:#111;-webkit-text-stroke:.25px #111}
.ar7{position:absolute;width:7px;height:4px;background:linear-gradient(#000,#000) 0 0/7px 1px no-repeat,linear-gradient(#000,#000) 1px 1px/5px 1px no-repeat,linear-gradient(#000,#000) 2px 2px/3px 1px no-repeat,linear-gradient(#000,#000) 3px 3px/1px 1px no-repeat}
</style>
<div class="a" style="left:65px;top:717px;width:349px;height:16px;background:#d4d0c8"></div>
<div class="fld" style="left:65px;top:717px;width:59px;height:16px"></div>
<div class="sm" style="left:69.500px;top:721.500px">150%</div>
<div class="btn" style="left:108px;top:719px;width:15px;height:14px"></div><div class="ar" style="left:112px;top:726px"></div>
<svg class="a" style="left:125px;top:717px" width="32" height="16" viewBox="125 717 32 16"><path d="M130 722h1v7h-1zM136 722v7l-4-3.500zM153 722v7l-4-3.500z" fill="#fff"/><path d="M129 721h1v7h-1zM135 721v7l-4-3.500zM152 721v7l-4-3.500z" fill="#808080"/></svg>
<div class="fld" style="left:157px;top:717px;width:43px;height:16px"></div>
<div class="sm" style="left:161.500px;top:721.500px">1</div>
<div class="btn" style="left:185px;top:719px;width:14px;height:14px"></div><div class="ar" style="left:189px;top:726px"></div>
<svg class="a" style="left:202px;top:717px" width="32" height="16" viewBox="202 717 32 16"><path d="M209 722v7l4-3.500zM223 722v7l4-3.500zM228 722h1v7h-1z" fill="#fff"/><path d="M208 721v7l4-3.500zM222 721v7l4-3.500zM227 721h1v7h-1z" fill="#808080"/></svg>
<div class="a" style="left:235px;top:717px;width:179px;height:16px;background:linear-gradient(#c6c6c6 0 1px,#ececec 1px 3px,#d6d6d6 3px);box-shadow:inset 1px 0 0 #f2f2f2,inset -1px 0 0 #8a8a8a"></div>
<div class="t" style="left:313px;top:719px"><svg class="z" width="12" height="12"><title>选</title><use href="#r9009"/></svg><svg class="z" width="12" height="12"><title>择</title><use href="#r62e9"/></svg></div>
<div class="a" style="left:403px;top:721px;width:0;height:0;border-top:4.500px solid transparent;border-bottom:4.500px solid transparent;border-left:5.500px solid #000"></div>

<!-- ===== bottom frame + taskbar ===== -->

<div class="a" style="left:4px;top:733px;width:1016px;height:1px;background:#444"></div>
<div class="a" style="left:3px;top:734px;width:1018px;height:1px;background:#f0f0f0"></div>
<div class="a" style="left:2px;top:735px;width:1020px;height:1px;background:#d6d6d6"></div>
<div class="a" style="left:1px;top:736px;width:1022px;height:1px;background:#eee"></div>
<div class="a" style="left:0;top:737px;width:1024px;height:1px;background:#747474"></div>
<div class="a" style="left:0;top:738px;width:1024px;height:30px;background:#d4d0c8"></div>
<div class="a" style="left:0;top:739px;width:1024px;height:1px;background:#fff"></div>
<!-- start button -->
<div class="btn" style="left:2px;top:742px;width:47px;height:22px"></div>
<svg class="a" style="left:4px;top:744px" width="17" height="16" viewBox="0 0 17 16">
  <path d="M2.600 1.600q2.800-1.800 5.600-.2l-1.300 5.600q-2.800-1.500-5.600.2z" fill="#e8632a"/>
  <path d="M9 1.900q2.900 1.500 5.900-.6l-1.300 5.600q-3 2.100-5.900.6z" fill="#6cb42c"/>
  <path d="M1 8.200q2.800-1.800 5.600-.2l-1.300 5.600q-2.800-1.500-5.600.2z" fill="#3a78d8"/>
  <path d="M7.400 8.500q2.900 1.500 5.900-.6l-1.300 5.600q-3 2.100-5.900.6z" fill="#f2c218"/>
</svg>
<div class="t" style="left:22px;top:745px"><svg class="z" width="12" height="12"><title>开</title><use href="#r5f00"/></svg><svg class="z" width="12" height="12"><title>始</title><use href="#r59cb"/></svg></div>
<!-- quick launch -->
<svg class="a" style="left:56px;top:745px" width="17" height="17" viewBox="0 0 17 17">
  <circle cx="8.500" cy="8.500" r="7.500" fill="#fff" stroke="#8a8a8a" stroke-width=".6"/>
  <path d="M8.500 8.500L8.500 1A7.500 7.500 0 0 1 16 8.500z" fill="#5aa02c"/>
  <path d="M8.500 8.500L16 8.500A7.500 7.500 0 0 1 8.500 16z" fill="#f0c020"/>
  <path d="M8.500 8.500L8.500 16A7.500 7.500 0 0 1 1 8.500z" fill="#2868c8"/>
  <path d="M8.500 8.500L1 8.500A7.500 7.500 0 0 1 8.500 1z" fill="#e8502a"/>
  <circle cx="8.500" cy="8.500" r="4.600" fill="#f4f4f4"/>
  <path d="M6.600 5.600v5.800l5-2.900z" fill="#1a1a1a"/>
</svg>
<svg class="a" style="left:79px;top:745px" width="18" height="18" viewBox="0 0 18 18">
  <rect x="1.500" y="2.500" width="13" height="13" rx="2.500" fill="#3a8ee8" stroke="#1858b0" stroke-width="1.200" transform="rotate(-6 8 9)"/>
  <rect x="4.500" y="5" width="7.500" height="8.500" fill="#fff" transform="rotate(-6 8 9)"/>
  <path d="M7 11l5-6 1.500 1.200-5 6-2 .8z" fill="#d8e8f8" stroke="#335" stroke-width=".7"/>
  <circle cx="14.200" cy="5.200" r="1.300" fill="#e03818"/>
</svg>
<svg class="a" style="left:102px;top:744px" width="19" height="19" viewBox="0 0 19 19">
  <defs><linearGradient id="ieg" x1="0" y1="0" x2="0" y2="1"><stop offset="0" stop-color="#3aa0f0"/><stop offset="1" stop-color="#1864c8"/></linearGradient></defs>
  <ellipse cx="9.500" cy="10" rx="9" ry="3.400" fill="none" stroke="#4aa4ee" stroke-width="1.400" transform="rotate(-35 9.500 10)"/>
  <g transform="translate(9.500 10.500) scale(1.220) translate(-9.500 -9.500)"><path d="M14.800 10.600H6.300a3.300 3.300 0 0 0 6 1.400h2.500a5.800 5.800 0 1 1 .2-3.600zM6.400 8.300h5.900a3 3 0 0 0-5.900 0z" fill="url(#ieg)"/></g>
</svg>
<svg class="a" style="left:130.500px;top:746px" width="10" height="8" viewBox="0 0 10 8"><title>»</title><path d="M.600 1l2.700 2.500l-2.700 2.500M4.900 1l2.700 2.500l-2.700 2.500" fill="none" stroke="#000" stroke-width="1.500"/></svg>
<!-- task button -->
<div class="a chk" style="left:143px;top:742px;width:159px;height:22px;box-sizing:border-box;border:1px solid;border-color:#404040 #fff #fff #404040;box-shadow:inset 1px 1px 0 #808080"></div>
<div class="a" style="left:148px;top:746px;width:16px;height:16px;background:linear-gradient(180deg,#f29a14,#cc5f08);box-shadow:inset 2px 0 0 #a84e06,inset 0 -1px 0 #8a3e04;font-size:10px;font-weight:bold;line-height:15px;text-align:center;color:#fbdc82;text-indent:1px;letter-spacing:-.3px">Ai</div>
<div class="t" style="left:168px;top:747px"><svg class="z" width="12" height="12"><title>未</title><use href="#r672a"/></svg><svg class="z" width="12" height="12"><title>标</title><use href="#r6807"/></svg><svg class="z" width="12" height="12"><title>题</title><use href="#r9898"/></svg><span>-2* @ 150% (C...</span></div>
<!-- tray -->
<svg class="a" style="left:957px;top:746px" width="18" height="16" viewBox="957 746 18 16">
  <path d="M961.500 747v1.500l1 1.200l1-1.200l1 1.200l1-1.200l1 1.200l1-1.200l1 1.200v1.800" fill="none" stroke="#000" stroke-width="1"/>
  <rect x="958.600" y="752.600" width="14.800" height="7.800" rx="1.600" fill="#fff" stroke="#000" stroke-width="1.200"/>
  <path d="M961 754.500h10.500M961 757.500h10.500" stroke="#000" stroke-width="2" stroke-dasharray="1 1" shape-rendering="crispEdges"/>
</svg>
<div class="a" style="left:978px;top:742px;width:1px;height:24px;background:#808080"></div>
<div class="a" style="left:979px;top:742px;width:1px;height:24px;background:#fff"></div>
<div class="a" style="left:985px;top:742px;width:37px;height:23px;box-sizing:border-box;border:1px solid;border-color:#808080 #fff #fff #808080"></div>
<svg class="a" style="left:989px;top:751px" width="10" height="8" viewBox="0 0 10 8"><title>«</title><path d="M4 1l-2.700 2.500l2.700 2.500M8.500 1l-2.700 2.500l2.700 2.500" fill="none" stroke="#000" stroke-width="1.500"/></svg>
<svg class="a" style="left:1002px;top:745px" width="18" height="16" viewBox="0 0 18 16">
  <rect x="2" y="2.500" width="7" height="6" fill="#3a3a78" stroke="#22224a" stroke-width="1"/>
  <path d="M2.500 10h6l1 2.500h-8z" fill="#6a8ae0"/>
  <ellipse cx="5.500" cy="13" rx="4" ry="1.500" fill="#eef" stroke="#4a5ac0" stroke-width=".8"/>
  <path d="M11 3.500q2 2.500 0 5M13.500 2q2.800 4 0 8" fill="none" stroke="#555" stroke-width=".9"/>
</svg>


</body>
</html>
